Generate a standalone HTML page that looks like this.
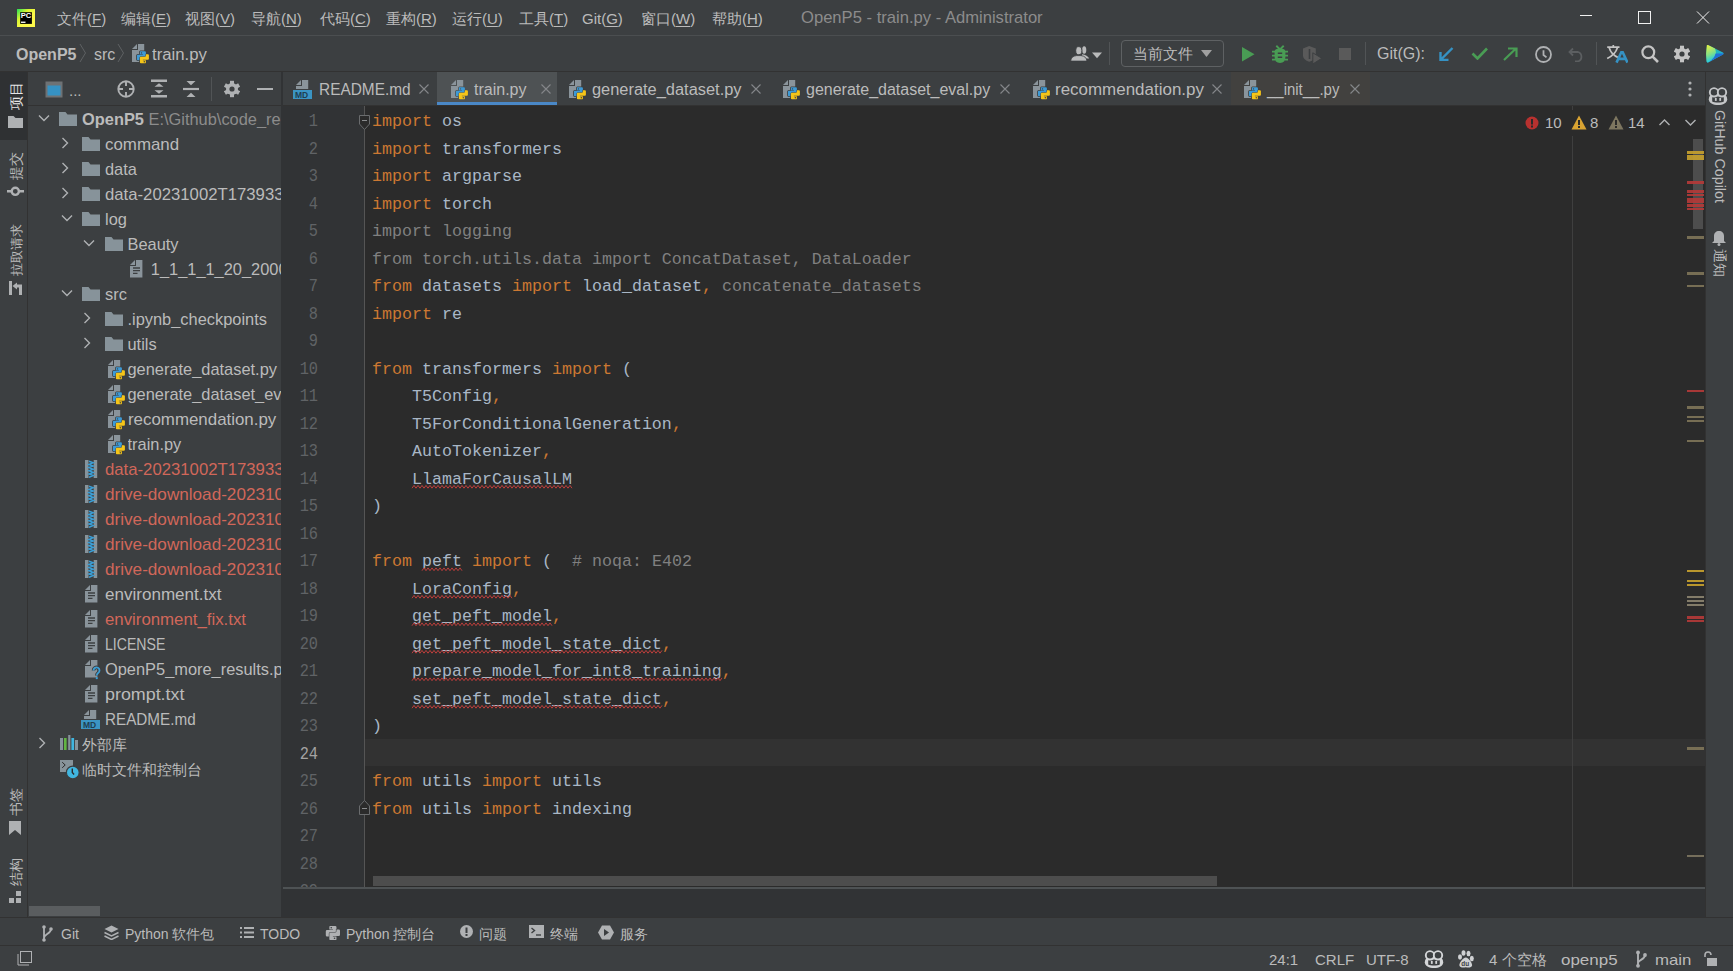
<!DOCTYPE html>
<html><head><meta charset="utf-8"><style>
html,body{margin:0;padding:0;}
body{width:1733px;height:971px;overflow:hidden;position:relative;background:#3c3f41;font-family:"Liberation Sans", sans-serif;}
body div, body svg{position:absolute;}
span,b,u{position:static;}
.t{white-space:nowrap;font-family:"Liberation Sans", sans-serif;}
.m{font-family:"Liberation Mono", monospace;white-space:pre;}

u{text-decoration:underline;text-underline-offset:2px;}
</style></head><body>
<div style="left:0px;top:0px;width:1733px;height:35px;background:#3c3f41;"></div>
<div style="left:0px;top:35px;width:1733px;height:1px;background:#4b4e50;"></div>
<div style="left:0px;top:36px;width:1733px;height:35px;background:#3c3f41;"></div>
<div style="left:0px;top:71px;width:1733px;height:1px;background:#323232;"></div>
<div style="left:0px;top:72px;width:27px;height:845px;background:#3c3f41;"></div>
<div style="left:0px;top:72px;width:27px;height:68px;background:#2f3133;"></div>
<div style="left:27px;top:72px;width:1px;height:845px;background:#323232;"></div>
<div style="left:28px;top:72px;width:253px;height:845px;background:#3c3f41;"></div>
<div style="left:28px;top:105px;width:253px;height:1px;background:#323232;"></div>
<div style="left:281px;top:72px;width:2px;height:845px;background:#313335;"></div>
<div style="left:283px;top:72px;width:1422px;height:33px;background:#3c3f41;"></div>
<div style="left:283px;top:105px;width:1422px;height:1px;background:#323232;"></div>
<div style="left:283px;top:106px;width:82px;height:782px;background:#313335;"></div>
<div style="left:364px;top:106px;width:1px;height:782px;background:#555555;"></div>
<div style="left:365px;top:106px;width:1340px;height:782px;background:#2b2b2b;"></div>
<div style="left:365px;top:739px;width:1340px;height:27px;background:#323232;"></div>
<div style="left:1572px;top:136px;width:1px;height:751px;background:#3f3f3f;"></div>
<div style="left:1572px;top:106px;width:1px;height:4px;background:#3f3f3f;"></div>
<div style="left:283px;top:887px;width:1422px;height:2px;background:#4e5254;"></div>
<div style="left:283px;top:889px;width:1422px;height:28px;background:#313335;"></div>
<div style="left:1705px;top:72px;width:28px;height:845px;background:#3c3f41;"></div>
<div style="left:1705px;top:72px;width:1px;height:845px;background:#323232;"></div>
<div style="left:0px;top:917px;width:1733px;height:1px;background:#323232;"></div>
<div style="left:0px;top:918px;width:1733px;height:27px;background:#3c3f41;"></div>
<div style="left:0px;top:945px;width:1733px;height:1px;background:#323232;"></div>
<div style="left:0px;top:946px;width:1733px;height:25px;background:#3c3f41;"></div>
<svg style="left:17px;top:9px;" width="18" height="18" viewBox="0 0 18 18"><defs><linearGradient id="pcg" x1="0" y1="0" x2="0.6" y2="0.6"><stop offset="0" stop-color="#21e05a"/><stop offset="0.55" stop-color="#d8f531"/><stop offset="1" stop-color="#fcf84a"/></linearGradient></defs><rect x="0" y="0" width="18" height="18" fill="url(#pcg)"/><rect x="3.2" y="3.2" width="11.7" height="11.7" fill="#000"/><text x="3.8" y="9.4" font-family="Liberation Sans" font-weight="bold" font-size="7.6" fill="#fff">PC</text><rect x="4" y="12.6" width="4.5" height="1.3" fill="#fff"/></svg>
<div class="t" style="left:57px;top:10px;font-size:15px;line-height:17px;color:#bbbbbb;">文件(<u>F</u>)</div>
<div class="t" style="left:121px;top:10px;font-size:15px;line-height:17px;color:#bbbbbb;">编辑(<u>E</u>)</div>
<div class="t" style="left:185px;top:10px;font-size:15px;line-height:17px;color:#bbbbbb;">视图(<u>V</u>)</div>
<div class="t" style="left:251px;top:10px;font-size:15px;line-height:17px;color:#bbbbbb;">导航(<u>N</u>)</div>
<div class="t" style="left:320px;top:10px;font-size:15px;line-height:17px;color:#bbbbbb;">代码(<u>C</u>)</div>
<div class="t" style="left:386px;top:10px;font-size:15px;line-height:17px;color:#bbbbbb;">重构(<u>R</u>)</div>
<div class="t" style="left:452px;top:10px;font-size:15px;line-height:17px;color:#bbbbbb;">运行(<u>U</u>)</div>
<div class="t" style="left:519px;top:10px;font-size:15px;line-height:17px;color:#bbbbbb;">工具(<u>T</u>)</div>
<div class="t" style="left:582px;top:10px;font-size:15px;line-height:17px;color:#bbbbbb;">Git(<u>G</u>)</div>
<div class="t" style="left:641px;top:10px;font-size:15px;line-height:17px;color:#bbbbbb;">窗口(<u>W</u>)</div>
<div class="t" style="left:712px;top:10px;font-size:15px;line-height:17px;color:#bbbbbb;">帮助(<u>H</u>)</div>
<div class="t" style="left:801px;top:9px;font-size:16.6px;line-height:18px;color:#8c8c8c;">OpenP5 - train.py - Administrator</div>
<div style="left:1580px;top:15px;width:12px;height:1px;background:#f0f0f0;"></div>
<div style="left:1638px;top:11px;width:13px;height:13px;background:transparent;border:1px solid #f0f0f0;box-sizing:border-box;"></div>
<svg style="left:1696px;top:11px;" width="14" height="13" viewBox="0 0 14 13"><path d="M1 0.5L13 12.5M13 0.5L1 12.5" stroke="#f0f0f0" stroke-width="1"/></svg>
<div class="t" style="left:16px;top:46px;font-size:16px;line-height:18px;color:#bbbbbb;"><b>OpenP5</b></div>
<svg style="left:79px;top:43px;" width="8" height="20" viewBox="0 0 8 20"><path d="M1 1L6.5 10L1 19" stroke="#5e6163" fill="none" stroke-width="1"/></svg>
<div class="t" style="left:94px;top:46px;font-size:16px;line-height:18px;color:#bbbbbb;">src</div>
<svg style="left:117px;top:43px;" width="8" height="20" viewBox="0 0 8 20"><path d="M1 1L6.5 10L1 19" stroke="#5e6163" fill="none" stroke-width="1"/></svg>
<svg style="left:131px;top:43px;" width="20" height="22" viewBox="0 0 20 22"><path d="M7 1H13.2V19H1V7H7Z" fill="#8a949b"/><path d="M1 6L6 1V6Z" fill="#8a949b"/><g transform="translate(5.9 8.3) scale(1.0)"><path d="M3.5 0H8Q9 0 9 1V5.5Q9 6.5 8 6.5H4Q3 6.5 3 7.5V9H1Q0 9 0 8V4.5Q0 3.5 1 3.5H6V3H3V1Q3 0 3.5 0Z" fill="none" stroke="#3c3f41" stroke-width="1.6"/><path d="M8.5 12H4Q3 12 3 11V6.5Q3 5.5 4 5.5H8Q9 5.5 9 4.5V3H11Q12 3 12 4V7.5Q12 8.5 11 8.5H6V9H9V11Q9 12 8.5 12Z" fill="none" stroke="#3c3f41" stroke-width="1.6"/><path d="M3.5 0H8Q9 0 9 1V5.5Q9 6.5 8 6.5H4Q3 6.5 3 7.5V9H1Q0 9 0 8V4.5Q0 3.5 1 3.5H6V3H3V1Q3 0 3.5 0Z" fill="#3d9ad6"/><path d="M8.5 12H4Q3 12 3 11V6.5Q3 5.5 4 5.5H8Q9 5.5 9 4.5V3H11Q12 3 12 4V7.5Q12 8.5 11 8.5H6V9H9V11Q9 12 8.5 12Z" fill="none" stroke="#3c3f41" stroke-width="0.9"/><path d="M8.5 12H4Q3 12 3 11V6.5Q3 5.5 4 5.5H8Q9 5.5 9 4.5V3H11Q12 3 12 4V7.5Q12 8.5 11 8.5H6V9H9V11Q9 12 8.5 12Z" fill="#f5c518"/><circle cx="4.6" cy="1.6" r="0.7" fill="#3c3f41"/><circle cx="7.4" cy="10.4" r="0.7" fill="#3c3f41"/></g></svg>
<div class="t" style="left:152px;top:46px;font-size:16px;line-height:18px;color:#bbbbbb;transform:scaleX(1.045);transform-origin:0 0;">train.py</div>
<svg style="left:1070px;top:45px;" width="33" height="17" viewBox="0 0 33 17"><ellipse cx="14.2" cy="5" rx="2.1" ry="3.8" fill="#b9babb"/><path d="M12 9.2Q17.5 9.8 19.2 13.6H12Z" fill="#b9babb"/><ellipse cx="8.8" cy="5.7" rx="3.1" ry="4.1" fill="#b9babb" stroke="#3c3f41" stroke-width="1"/><path d="M0.7 16.1Q1 11.2 6.6 10.6H11Q16.5 11.2 16.9 16.1Z" fill="#b9babb" stroke="#3c3f41" stroke-width="0.8"/><path d="M22 7.6H32L27 13.2Z" fill="#b9babb"/></svg>
<div style="left:1109px;top:42px;width:1px;height:23px;background:#515456;"></div>
<div style="left:1121px;top:40px;width:103px;height:27px;background:transparent;border:1px solid #5e6163;border-radius:4px;box-sizing:border-box;"></div>
<div class="t" style="left:1133px;top:45px;font-size:15px;line-height:18px;color:#bbbbbb;">当前文件</div>
<svg style="left:1201px;top:50px;" width="12" height="8" viewBox="0 0 12 8"><path d="M0 0h11l-5.5 7z" fill="#a0a0a0"/></svg>
<svg style="left:1242px;top:47px;" width="13" height="15" viewBox="0 0 13 15"><path d="M0 0L12.5 7.2L0 14.5Z" fill="#499c54"/></svg>
<svg style="left:1272px;top:45px;" width="16" height="18" viewBox="0 0 16 18"><path d="M4.3 0.8L8 4.4L11.7 0.8" stroke="#499c54" stroke-width="1.9" fill="none"/><path d="M2.6 6.8Q2.6 3.6 8 3.6Q13.4 3.6 13.4 6.8V12Q13.4 17.9 8 17.9Q2.6 17.9 2.6 12Z" fill="#499c54"/><path d="M0 6.6h3M13 6.6h3M0 10.6h3M13 10.6h3M0 14.6h3M13 14.6h3" stroke="#499c54" stroke-width="1.9"/><path d="M5.8 8.3h4.4M5.8 12.2h4.4" stroke="#3c3f41" stroke-width="1.6"/></svg>
<svg style="left:1302px;top:46px;" width="20" height="19" viewBox="0 0 20 19"><path d="M1 2.5L7.2 0L13.8 2.5V9.5C13.8 12.5 11 14.5 7.2 15.8C3.5 14.5 1 12.5 1 9.5Z" fill="#5a5a5a"/><path d="M7.5 3V13" stroke="#3c3f41" stroke-width="1.6"/><path d="M10.8 6.8L19.8 12.3L10.8 18Z" fill="#5a5a5a" stroke="#3c3f41" stroke-width="1"/></svg>
<div style="left:1339px;top:48px;width:12px;height:12px;background:#5a5a5a;"></div>
<div style="left:1365px;top:42px;width:1px;height:23px;background:#515456;"></div>
<div class="t" style="left:1377px;top:45px;font-size:16px;line-height:18px;color:#bbbbbb;">Git(G):</div>
<svg style="left:1439px;top:47px;" width="15" height="14" viewBox="0 0 15 14"><path d="M13.5 1L2 12.5M1.5 5v8h8" stroke="#3592c4" stroke-width="2.4" fill="none"/></svg>
<svg style="left:1471px;top:47px;" width="17" height="13" viewBox="0 0 17 13"><path d="M1.5 6.5l5 5L16 1.5" stroke="#499c54" stroke-width="2.6" fill="none"/></svg>
<svg style="left:1503px;top:47px;" width="15" height="14" viewBox="0 0 15 14"><path d="M1 13L13 1.5M5 1.5h8.5v8.5" stroke="#499c54" stroke-width="2.2" fill="none"/></svg>
<svg style="left:1534px;top:46px;" width="19" height="17" viewBox="0 0 19 17"><circle cx="9.5" cy="8.5" r="7.5" stroke="#afb1b3" stroke-width="1.8" fill="none"/><path d="M9.5 4.2V9l3 2.4" stroke="#afb1b3" stroke-width="1.8" fill="none"/></svg>
<svg style="left:1568px;top:47px;" width="17" height="15" viewBox="0 0 17 15"><path d="M5 1.5L1.5 5L5 8.5" stroke="#5c5f61" stroke-width="1.8" fill="none"/><path d="M2 5h8a5 5 0 0 1 0 9.5H7" stroke="#5c5f61" stroke-width="1.8" fill="none"/></svg>
<div style="left:1596px;top:42px;width:1px;height:23px;background:#515456;"></div>
<svg style="left:1606px;top:44px;" width="22" height="20" viewBox="0 0 22 20"><path d="M1.2 3.2H13.5M7.3 1V3.2M3.2 3.8C4.5 8.5 8 12 13 14M11.4 3.8C10 8.5 6.5 12 1.2 14.5" stroke="#c4c4c4" stroke-width="1.7" fill="none"/><path d="M10.5 18.6L15.3 8.3H16.7L21.5 18.6M12.4 14.9H19.6" stroke="#3592c4" stroke-width="2.6" fill="none"/></svg>
<svg style="left:1640px;top:45px;" width="20" height="19" viewBox="0 0 20 19"><circle cx="8.3" cy="7.3" r="5.9" stroke="#c4c4c4" stroke-width="2.2" fill="none"/><path d="M12.6 11.6L18 17" stroke="#c4c4c4" stroke-width="2.6"/></svg>
<svg style="left:1674px;top:45px;" width="16" height="18" viewBox="0 0 16 18"><g transform="translate(8 9)"><circle r="6" fill="#c4c4c4"/><rect x="-2" y="-8.3" width="4" height="4" fill="#c4c4c4" transform="rotate(0)"/><rect x="-2" y="-8.3" width="4" height="4" fill="#c4c4c4" transform="rotate(60)"/><rect x="-2" y="-8.3" width="4" height="4" fill="#c4c4c4" transform="rotate(120)"/><rect x="-2" y="-8.3" width="4" height="4" fill="#c4c4c4" transform="rotate(180)"/><rect x="-2" y="-8.3" width="4" height="4" fill="#c4c4c4" transform="rotate(240)"/><rect x="-2" y="-8.3" width="4" height="4" fill="#c4c4c4" transform="rotate(300)"/><circle r="2.6" fill="#3c3f41"/></g></svg>
<svg style="left:1705px;top:44px;" width="20" height="20" viewBox="0 0 20 20"><defs><linearGradient id="lg1" x1="0" y1="0" x2="0.3" y2="1"><stop offset="0" stop-color="#f5f03a"/><stop offset="0.6" stop-color="#7fe08a"/><stop offset="1" stop-color="#1ec8e8"/></linearGradient><linearGradient id="lg2" x1="0" y1="0" x2="1" y2="1"><stop offset="0" stop-color="#22c48a"/><stop offset="1" stop-color="#1fa6f0"/></linearGradient></defs><path d="M1.8 2.2Q1.5 0.5 3.5 1.2L18 8.5Q19.4 9.5 18 10.5L3.5 18.2Q1.5 19 1.6 17Q0.6 9.5 1.8 2.2Z" fill="url(#lg2)"/><path d="M1.8 2.2Q1.5 0.5 3.5 1.2L10 4.5Q12 9.5 10 14.5L3.5 18.2Q1.5 19 1.6 17Q0.6 9.5 1.8 2.2Z" fill="url(#lg1)"/><path d="M10.5 9.6L18.6 9.6L18 10.5L4 18Q9.5 14.5 10.5 9.6Z" fill="#1f6fd6"/></svg>
<div class="t" style="left:10px;top:110px;font-size:13.5px;line-height:13.5px;color:#e6e6e6;transform-origin:0 0;transform:rotate(-90deg);white-space:nowrap">项目</div>
<svg style="left:8px;top:116px;" width="15" height="12" viewBox="0 0 15 12"><path d="M0 0h5.5l2 2H15v10H0z" fill="#afb1b3"/></svg>
<div class="t" style="left:10px;top:180px;font-size:13.5px;line-height:13.5px;color:#bbbbbb;transform-origin:0 0;transform:rotate(-90deg);white-space:nowrap">提交</div>
<svg style="left:7px;top:186px;" width="17" height="11" viewBox="0 0 17 11"><circle cx="8.3" cy="5.3" r="3.6" stroke="#afb1b3" stroke-width="2.4" fill="none"/><path d="M0 5.3h4.5M12 5.3h5" stroke="#afb1b3" stroke-width="2.6"/></svg>
<div class="t" style="left:10px;top:276px;font-size:13px;line-height:13px;color:#bbbbbb;transform-origin:0 0;transform:rotate(-90deg);white-space:nowrap">拉取请求</div>
<svg style="left:9px;top:281px;" width="14" height="15" viewBox="0 0 14 15"><rect x="0" y="0" width="3" height="14" fill="#afb1b3"/><path d="M3.5 5L8 1.5V8.5z" fill="#afb1b3"/><path d="M7 5H11.5V14" stroke="#afb1b3" stroke-width="3" fill="none"/></svg>
<div class="t" style="left:10px;top:816px;font-size:13.5px;line-height:13.5px;color:#bbbbbb;transform-origin:0 0;transform:rotate(-90deg);white-space:nowrap">书签</div>
<svg style="left:9px;top:821px;" width="13" height="15" viewBox="0 0 13 15"><path d="M0 0h12v14l-6-5-6 5z" fill="#afb1b3"/></svg>
<div class="t" style="left:10px;top:886px;font-size:13.5px;line-height:13.5px;color:#bbbbbb;transform-origin:0 0;transform:rotate(-90deg);white-space:nowrap">结构</div>
<svg style="left:9px;top:891px;" width="13" height="13" viewBox="0 0 13 13"><rect x="7" y="0" width="5" height="5" fill="#afb1b3"/><rect x="0" y="7" width="5" height="5" fill="#afb1b3"/><rect x="7" y="7" width="5" height="5" fill="#afb1b3"/></svg>
<svg style="left:1708px;top:87px;" width="20" height="19" viewBox="0 0 20 19"><path d="M0.8 12.2C0.8 9.6 2.2 8 4 8H16C17.8 8 19.2 9.6 19.2 12.2C19.2 16 15 18 10 18C5 18 0.8 16 0.8 12.2Z" fill="#c4c6c8"/><path d="M4.2 9.6H15.8V14.6C14 15.9 6 15.9 4.2 14.6Z" fill="#3c3f41"/><rect x="6.9" y="10.9" width="1.8" height="3" fill="#c4c6c8"/><rect x="11.3" y="10.9" width="1.8" height="3" fill="#c4c6c8"/><ellipse cx="6" cy="5.3" rx="4.2" ry="4.2" fill="#3c3f41" stroke="#c4c6c8" stroke-width="1.9"/><ellipse cx="14" cy="5.3" rx="4.2" ry="4.2" fill="#3c3f41" stroke="#c4c6c8" stroke-width="1.9"/></svg>
<div class="t" style="left:1727px;top:110px;font-size:14.3px;line-height:14.3px;color:#bbbbbb;transform-origin:0 0;transform:rotate(90deg);white-space:nowrap">GitHub Copilot</div>
<svg style="left:1711px;top:230px;" width="16" height="16" viewBox="0 0 16 16"><path d="M8 1c3 0 5 2 5 5v5l2 2H1l2-2V6c0-3 2-5 5-5z" fill="#afb1b3"/><circle cx="8" cy="14.5" r="1.5" fill="#afb1b3"/></svg>
<div class="t" style="left:1727px;top:249px;font-size:14px;line-height:14px;color:#bbbbbb;transform-origin:0 0;transform:rotate(90deg);white-space:nowrap">通知</div>
<svg style="left:45px;top:81px;" width="18" height="17" viewBox="0 0 18 17"><rect x="0.5" y="0.5" width="17" height="16" fill="#6e7275"/><rect x="2.5" y="4.5" width="13" height="10" fill="#3592c4"/></svg>
<div class="t" style="left:69px;top:83px;font-size:15px;line-height:16px;color:#bbbbbb;">...</div>
<svg style="left:117px;top:80px;" width="18" height="18" viewBox="0 0 18 18"><circle cx="9" cy="9" r="7.7" stroke="#afb1b3" stroke-width="1.9" fill="none"/><path d="M9 1.5v4.5M9 12v4.5M1.5 9h4.5M12 9h4.5" stroke="#afb1b3" stroke-width="1.9"/></svg>
<svg style="left:151px;top:79px;" width="16" height="19" viewBox="0 0 16 19"><path d="M0 1.8h16M0 17.2h16" stroke="#afb1b3" stroke-width="2.6"/><path d="M3.5 7.8L8 4.3L12.5 7.8zM3.5 11.2L8 14.7L12.5 11.2z" fill="#afb1b3"/></svg>
<svg style="left:183px;top:80px;" width="16" height="18" viewBox="0 0 16 18"><path d="M0 9h16" stroke="#afb1b3" stroke-width="2.2"/><path d="M3.5 1L8 5.2L12.5 1zM3.5 17L8 12.8L12.5 17z" fill="#afb1b3"/></svg>
<div style="left:211px;top:77px;width:1px;height:24px;background:#515456;"></div>
<svg style="left:224px;top:80px;" width="16" height="18" viewBox="0 0 16 18"><g transform="translate(8 9)"><circle r="6" fill="#afb1b3"/><rect x="-2" y="-8.2" width="4" height="4" fill="#afb1b3" transform="rotate(0)"/><rect x="-2" y="-8.2" width="4" height="4" fill="#afb1b3" transform="rotate(60)"/><rect x="-2" y="-8.2" width="4" height="4" fill="#afb1b3" transform="rotate(120)"/><rect x="-2" y="-8.2" width="4" height="4" fill="#afb1b3" transform="rotate(180)"/><rect x="-2" y="-8.2" width="4" height="4" fill="#afb1b3" transform="rotate(240)"/><rect x="-2" y="-8.2" width="4" height="4" fill="#afb1b3" transform="rotate(300)"/><circle r="2.6" fill="#3c3f41"/></g></svg>
<div style="left:257px;top:88px;width:16px;height:2px;background:#afb1b3;"></div>
<svg style="left:38px;top:114px;" width="12" height="8" viewBox="0 0 12 8"><path d="M1 1.5l5 5 5-5" stroke="#afb1b3" stroke-width="1.4" fill="none"/></svg>
<svg style="left:59px;top:112px;" width="18" height="14" viewBox="0 0 18 14"><path d="M0 0h6.5l2 2.5H18V14H0z" fill="#87939a"/></svg>
<div class="t" style="left:82px;top:110px;width:199px;overflow:hidden;font-size:16.4px;line-height:18px;color:#bbbbbb"><b>OpenP5</b> <span style="color:#8c8c8c">E:\Github\code_re</span></div>
<svg style="left:61px;top:137px;" width="8" height="12" viewBox="0 0 8 12"><path d="M1.5 1l5 5-5 5" stroke="#afb1b3" stroke-width="1.4" fill="none"/></svg>
<svg style="left:82px;top:137px;" width="18" height="14" viewBox="0 0 18 14"><path d="M0 0h6.5l2 2.5H18V14H0z" fill="#87939a"/></svg>
<div style="left:105px;top:135px;width:176px;height:20px;overflow:hidden"><div class="t" style="left:0;top:0;font-size:16.4px;line-height:18px;color:#bbbbbb;transform:scaleX(1.03);transform-origin:0 0">command</div></div>
<svg style="left:61px;top:162px;" width="8" height="12" viewBox="0 0 8 12"><path d="M1.5 1l5 5-5 5" stroke="#afb1b3" stroke-width="1.4" fill="none"/></svg>
<svg style="left:82px;top:162px;" width="18" height="14" viewBox="0 0 18 14"><path d="M0 0h6.5l2 2.5H18V14H0z" fill="#87939a"/></svg>
<div class="t" style="left:105px;top:160px;width:176px;overflow:hidden;font-size:16.4px;line-height:18px;color:#bbbbbb">data</div>
<svg style="left:61px;top:187px;" width="8" height="12" viewBox="0 0 8 12"><path d="M1.5 1l5 5-5 5" stroke="#afb1b3" stroke-width="1.4" fill="none"/></svg>
<svg style="left:82px;top:187px;" width="18" height="14" viewBox="0 0 18 14"><path d="M0 0h6.5l2 2.5H18V14H0z" fill="#87939a"/></svg>
<div style="left:105px;top:185px;width:176px;height:20px;overflow:hidden"><div class="t" style="left:0;top:0;font-size:16.4px;line-height:18px;color:#bbbbbb;transform:scaleX(1.02);transform-origin:0 0">data-20231002T1739332</div></div>
<svg style="left:61px;top:214px;" width="12" height="8" viewBox="0 0 12 8"><path d="M1 1.5l5 5 5-5" stroke="#afb1b3" stroke-width="1.4" fill="none"/></svg>
<svg style="left:82px;top:212px;" width="18" height="14" viewBox="0 0 18 14"><path d="M0 0h6.5l2 2.5H18V14H0z" fill="#87939a"/></svg>
<div class="t" style="left:105px;top:210px;width:176px;overflow:hidden;font-size:16.4px;line-height:18px;color:#bbbbbb">log</div>
<svg style="left:83px;top:239px;" width="12" height="8" viewBox="0 0 12 8"><path d="M1 1.5l5 5 5-5" stroke="#afb1b3" stroke-width="1.4" fill="none"/></svg>
<svg style="left:104.5px;top:237px;" width="18" height="14" viewBox="0 0 18 14"><path d="M0 0h6.5l2 2.5H18V14H0z" fill="#87939a"/></svg>
<div class="t" style="left:127.5px;top:235px;width:153.5px;overflow:hidden;font-size:16.4px;line-height:18px;color:#bbbbbb">Beauty</div>
<svg style="left:130.3px;top:260px;" width="13" height="18" viewBox="0 0 13 18"><path d="M6 0H12.4V17.5H0V6H6Z" fill="#8a949b"/><path d="M0 5L5 0V5Z" fill="#8a949b"/><path d="M3 8h7M3 10.6h7M3 13.3h4.5" stroke="#3c3f41" stroke-width="1.3"/></svg>
<div class="t" style="left:150.8px;top:260px;width:130.2px;overflow:hidden;font-size:16.4px;line-height:18px;color:#bbbbbb">1_1_1_1_20_2000_</div>
<svg style="left:61px;top:289px;" width="12" height="8" viewBox="0 0 12 8"><path d="M1 1.5l5 5 5-5" stroke="#afb1b3" stroke-width="1.4" fill="none"/></svg>
<svg style="left:82px;top:287px;" width="18" height="14" viewBox="0 0 18 14"><path d="M0 0h6.5l2 2.5H18V14H0z" fill="#87939a"/></svg>
<div class="t" style="left:105px;top:285px;width:176px;overflow:hidden;font-size:16.4px;line-height:18px;color:#bbbbbb">src</div>
<svg style="left:83px;top:312px;" width="8" height="12" viewBox="0 0 8 12"><path d="M1.5 1l5 5-5 5" stroke="#afb1b3" stroke-width="1.4" fill="none"/></svg>
<svg style="left:104.5px;top:312px;" width="18" height="14" viewBox="0 0 18 14"><path d="M0 0h6.5l2 2.5H18V14H0z" fill="#87939a"/></svg>
<div class="t" style="left:127.5px;top:310px;width:153.5px;overflow:hidden;font-size:16.4px;line-height:18px;color:#bbbbbb">.ipynb_checkpoints</div>
<svg style="left:83px;top:337px;" width="8" height="12" viewBox="0 0 8 12"><path d="M1.5 1l5 5-5 5" stroke="#afb1b3" stroke-width="1.4" fill="none"/></svg>
<svg style="left:104.5px;top:337px;" width="18" height="14" viewBox="0 0 18 14"><path d="M0 0h6.5l2 2.5H18V14H0z" fill="#87939a"/></svg>
<div class="t" style="left:127.5px;top:335px;width:153.5px;overflow:hidden;font-size:16.4px;line-height:18px;color:#bbbbbb">utils</div>
<svg style="left:106.9px;top:358.9px;" width="20" height="22" viewBox="0 0 20 22"><path d="M7 1H13.2V19H1V7H7Z" fill="#8a949b"/><path d="M1 6L6 1V6Z" fill="#8a949b"/><g transform="translate(5.9 8.3) scale(1.0)"><path d="M3.5 0H8Q9 0 9 1V5.5Q9 6.5 8 6.5H4Q3 6.5 3 7.5V9H1Q0 9 0 8V4.5Q0 3.5 1 3.5H6V3H3V1Q3 0 3.5 0Z" fill="none" stroke="#3c3f41" stroke-width="1.6"/><path d="M8.5 12H4Q3 12 3 11V6.5Q3 5.5 4 5.5H8Q9 5.5 9 4.5V3H11Q12 3 12 4V7.5Q12 8.5 11 8.5H6V9H9V11Q9 12 8.5 12Z" fill="none" stroke="#3c3f41" stroke-width="1.6"/><path d="M3.5 0H8Q9 0 9 1V5.5Q9 6.5 8 6.5H4Q3 6.5 3 7.5V9H1Q0 9 0 8V4.5Q0 3.5 1 3.5H6V3H3V1Q3 0 3.5 0Z" fill="#3d9ad6"/><path d="M8.5 12H4Q3 12 3 11V6.5Q3 5.5 4 5.5H8Q9 5.5 9 4.5V3H11Q12 3 12 4V7.5Q12 8.5 11 8.5H6V9H9V11Q9 12 8.5 12Z" fill="none" stroke="#3c3f41" stroke-width="0.9"/><path d="M8.5 12H4Q3 12 3 11V6.5Q3 5.5 4 5.5H8Q9 5.5 9 4.5V3H11Q12 3 12 4V7.5Q12 8.5 11 8.5H6V9H9V11Q9 12 8.5 12Z" fill="#f5c518"/><circle cx="4.6" cy="1.6" r="0.7" fill="#3c3f41"/><circle cx="7.4" cy="10.4" r="0.7" fill="#3c3f41"/></g></svg>
<div class="t" style="left:127.5px;top:360px;width:153.5px;overflow:hidden;font-size:16.4px;line-height:18px;color:#bbbbbb">generate_dataset.py</div>
<svg style="left:106.9px;top:383.9px;" width="20" height="22" viewBox="0 0 20 22"><path d="M7 1H13.2V19H1V7H7Z" fill="#8a949b"/><path d="M1 6L6 1V6Z" fill="#8a949b"/><g transform="translate(5.9 8.3) scale(1.0)"><path d="M3.5 0H8Q9 0 9 1V5.5Q9 6.5 8 6.5H4Q3 6.5 3 7.5V9H1Q0 9 0 8V4.5Q0 3.5 1 3.5H6V3H3V1Q3 0 3.5 0Z" fill="none" stroke="#3c3f41" stroke-width="1.6"/><path d="M8.5 12H4Q3 12 3 11V6.5Q3 5.5 4 5.5H8Q9 5.5 9 4.5V3H11Q12 3 12 4V7.5Q12 8.5 11 8.5H6V9H9V11Q9 12 8.5 12Z" fill="none" stroke="#3c3f41" stroke-width="1.6"/><path d="M3.5 0H8Q9 0 9 1V5.5Q9 6.5 8 6.5H4Q3 6.5 3 7.5V9H1Q0 9 0 8V4.5Q0 3.5 1 3.5H6V3H3V1Q3 0 3.5 0Z" fill="#3d9ad6"/><path d="M8.5 12H4Q3 12 3 11V6.5Q3 5.5 4 5.5H8Q9 5.5 9 4.5V3H11Q12 3 12 4V7.5Q12 8.5 11 8.5H6V9H9V11Q9 12 8.5 12Z" fill="none" stroke="#3c3f41" stroke-width="0.9"/><path d="M8.5 12H4Q3 12 3 11V6.5Q3 5.5 4 5.5H8Q9 5.5 9 4.5V3H11Q12 3 12 4V7.5Q12 8.5 11 8.5H6V9H9V11Q9 12 8.5 12Z" fill="#f5c518"/><circle cx="4.6" cy="1.6" r="0.7" fill="#3c3f41"/><circle cx="7.4" cy="10.4" r="0.7" fill="#3c3f41"/></g></svg>
<div class="t" style="left:127.5px;top:385px;width:153.5px;overflow:hidden;font-size:16.4px;line-height:18px;color:#bbbbbb">generate_dataset_eval.py</div>
<svg style="left:106.9px;top:408.9px;" width="20" height="22" viewBox="0 0 20 22"><path d="M7 1H13.2V19H1V7H7Z" fill="#8a949b"/><path d="M1 6L6 1V6Z" fill="#8a949b"/><g transform="translate(5.9 8.3) scale(1.0)"><path d="M3.5 0H8Q9 0 9 1V5.5Q9 6.5 8 6.5H4Q3 6.5 3 7.5V9H1Q0 9 0 8V4.5Q0 3.5 1 3.5H6V3H3V1Q3 0 3.5 0Z" fill="none" stroke="#3c3f41" stroke-width="1.6"/><path d="M8.5 12H4Q3 12 3 11V6.5Q3 5.5 4 5.5H8Q9 5.5 9 4.5V3H11Q12 3 12 4V7.5Q12 8.5 11 8.5H6V9H9V11Q9 12 8.5 12Z" fill="none" stroke="#3c3f41" stroke-width="1.6"/><path d="M3.5 0H8Q9 0 9 1V5.5Q9 6.5 8 6.5H4Q3 6.5 3 7.5V9H1Q0 9 0 8V4.5Q0 3.5 1 3.5H6V3H3V1Q3 0 3.5 0Z" fill="#3d9ad6"/><path d="M8.5 12H4Q3 12 3 11V6.5Q3 5.5 4 5.5H8Q9 5.5 9 4.5V3H11Q12 3 12 4V7.5Q12 8.5 11 8.5H6V9H9V11Q9 12 8.5 12Z" fill="none" stroke="#3c3f41" stroke-width="0.9"/><path d="M8.5 12H4Q3 12 3 11V6.5Q3 5.5 4 5.5H8Q9 5.5 9 4.5V3H11Q12 3 12 4V7.5Q12 8.5 11 8.5H6V9H9V11Q9 12 8.5 12Z" fill="#f5c518"/><circle cx="4.6" cy="1.6" r="0.7" fill="#3c3f41"/><circle cx="7.4" cy="10.4" r="0.7" fill="#3c3f41"/></g></svg>
<div style="left:127.5px;top:410px;width:153.5px;height:20px;overflow:hidden"><div class="t" style="left:0;top:0;font-size:16.4px;line-height:18px;color:#bbbbbb;transform:scaleX(1.03);transform-origin:0 0">recommendation.py</div></div>
<svg style="left:106.9px;top:433.9px;" width="20" height="22" viewBox="0 0 20 22"><path d="M7 1H13.2V19H1V7H7Z" fill="#8a949b"/><path d="M1 6L6 1V6Z" fill="#8a949b"/><g transform="translate(5.9 8.3) scale(1.0)"><path d="M3.5 0H8Q9 0 9 1V5.5Q9 6.5 8 6.5H4Q3 6.5 3 7.5V9H1Q0 9 0 8V4.5Q0 3.5 1 3.5H6V3H3V1Q3 0 3.5 0Z" fill="none" stroke="#3c3f41" stroke-width="1.6"/><path d="M8.5 12H4Q3 12 3 11V6.5Q3 5.5 4 5.5H8Q9 5.5 9 4.5V3H11Q12 3 12 4V7.5Q12 8.5 11 8.5H6V9H9V11Q9 12 8.5 12Z" fill="none" stroke="#3c3f41" stroke-width="1.6"/><path d="M3.5 0H8Q9 0 9 1V5.5Q9 6.5 8 6.5H4Q3 6.5 3 7.5V9H1Q0 9 0 8V4.5Q0 3.5 1 3.5H6V3H3V1Q3 0 3.5 0Z" fill="#3d9ad6"/><path d="M8.5 12H4Q3 12 3 11V6.5Q3 5.5 4 5.5H8Q9 5.5 9 4.5V3H11Q12 3 12 4V7.5Q12 8.5 11 8.5H6V9H9V11Q9 12 8.5 12Z" fill="none" stroke="#3c3f41" stroke-width="0.9"/><path d="M8.5 12H4Q3 12 3 11V6.5Q3 5.5 4 5.5H8Q9 5.5 9 4.5V3H11Q12 3 12 4V7.5Q12 8.5 11 8.5H6V9H9V11Q9 12 8.5 12Z" fill="#f5c518"/><circle cx="4.6" cy="1.6" r="0.7" fill="#3c3f41"/><circle cx="7.4" cy="10.4" r="0.7" fill="#3c3f41"/></g></svg>
<div class="t" style="left:127.5px;top:435px;width:153.5px;overflow:hidden;font-size:16.4px;line-height:18px;color:#bbbbbb">train.py</div>
<svg style="left:84.8px;top:460px;" width="13" height="18" viewBox="0 0 13 18"><rect x="0" y="0" width="3.5" height="18" fill="#87939a"/><rect x="8.7" y="0" width="3.5" height="18" fill="#87939a"/><path d="M4 1.2l4.2 1.6-4.2 1.6 4.2 1.6-4.2 1.6 4.2 1.6-4.2 1.6 4.2 1.6-4.2 1.6 4.2 1.6-4.2 1.6" stroke="#3c9fd6" stroke-width="1.5" fill="none"/></svg>
<div style="left:105px;top:460px;width:176px;height:20px;overflow:hidden"><div class="t" style="left:0;top:0;font-size:16.4px;line-height:18px;color:#d1675a;transform:scaleX(1.02);transform-origin:0 0">data-20231002T1739332</div></div>
<svg style="left:84.8px;top:485px;" width="13" height="18" viewBox="0 0 13 18"><rect x="0" y="0" width="3.5" height="18" fill="#87939a"/><rect x="8.7" y="0" width="3.5" height="18" fill="#87939a"/><path d="M4 1.2l4.2 1.6-4.2 1.6 4.2 1.6-4.2 1.6 4.2 1.6-4.2 1.6 4.2 1.6-4.2 1.6 4.2 1.6-4.2 1.6" stroke="#3c9fd6" stroke-width="1.5" fill="none"/></svg>
<div style="left:105px;top:485px;width:176px;height:20px;overflow:hidden"><div class="t" style="left:0;top:0;font-size:16.4px;line-height:18px;color:#d1675a;transform:scaleX(1.045);transform-origin:0 0">drive-download-2023100</div></div>
<svg style="left:84.8px;top:510px;" width="13" height="18" viewBox="0 0 13 18"><rect x="0" y="0" width="3.5" height="18" fill="#87939a"/><rect x="8.7" y="0" width="3.5" height="18" fill="#87939a"/><path d="M4 1.2l4.2 1.6-4.2 1.6 4.2 1.6-4.2 1.6 4.2 1.6-4.2 1.6 4.2 1.6-4.2 1.6 4.2 1.6-4.2 1.6" stroke="#3c9fd6" stroke-width="1.5" fill="none"/></svg>
<div style="left:105px;top:510px;width:176px;height:20px;overflow:hidden"><div class="t" style="left:0;top:0;font-size:16.4px;line-height:18px;color:#d1675a;transform:scaleX(1.045);transform-origin:0 0">drive-download-2023100</div></div>
<svg style="left:84.8px;top:535px;" width="13" height="18" viewBox="0 0 13 18"><rect x="0" y="0" width="3.5" height="18" fill="#87939a"/><rect x="8.7" y="0" width="3.5" height="18" fill="#87939a"/><path d="M4 1.2l4.2 1.6-4.2 1.6 4.2 1.6-4.2 1.6 4.2 1.6-4.2 1.6 4.2 1.6-4.2 1.6 4.2 1.6-4.2 1.6" stroke="#3c9fd6" stroke-width="1.5" fill="none"/></svg>
<div style="left:105px;top:535px;width:176px;height:20px;overflow:hidden"><div class="t" style="left:0;top:0;font-size:16.4px;line-height:18px;color:#d1675a;transform:scaleX(1.045);transform-origin:0 0">drive-download-2023100</div></div>
<svg style="left:84.8px;top:560px;" width="13" height="18" viewBox="0 0 13 18"><rect x="0" y="0" width="3.5" height="18" fill="#87939a"/><rect x="8.7" y="0" width="3.5" height="18" fill="#87939a"/><path d="M4 1.2l4.2 1.6-4.2 1.6 4.2 1.6-4.2 1.6 4.2 1.6-4.2 1.6 4.2 1.6-4.2 1.6 4.2 1.6-4.2 1.6" stroke="#3c9fd6" stroke-width="1.5" fill="none"/></svg>
<div style="left:105px;top:560px;width:176px;height:20px;overflow:hidden"><div class="t" style="left:0;top:0;font-size:16.4px;line-height:18px;color:#d1675a;transform:scaleX(1.045);transform-origin:0 0">drive-download-2023100</div></div>
<svg style="left:84.5px;top:585px;" width="13" height="18" viewBox="0 0 13 18"><path d="M6 0H12.4V17.5H0V6H6Z" fill="#8a949b"/><path d="M0 5L5 0V5Z" fill="#8a949b"/><path d="M3 8h7M3 10.6h7M3 13.3h4.5" stroke="#3c3f41" stroke-width="1.3"/></svg>
<div style="left:105px;top:585px;width:176px;height:20px;overflow:hidden"><div class="t" style="left:0;top:0;font-size:16.4px;line-height:18px;color:#bbbbbb;transform:scaleX(1.04);transform-origin:0 0">environment.txt</div></div>
<svg style="left:84.5px;top:610px;" width="13" height="18" viewBox="0 0 13 18"><path d="M6 0H12.4V17.5H0V6H6Z" fill="#8a949b"/><path d="M0 5L5 0V5Z" fill="#8a949b"/><path d="M3 8h7M3 10.6h7M3 13.3h4.5" stroke="#3c3f41" stroke-width="1.3"/></svg>
<div style="left:105px;top:610px;width:176px;height:20px;overflow:hidden"><div class="t" style="left:0;top:0;font-size:16.4px;line-height:18px;color:#d1675a;transform:scaleX(1.025);transform-origin:0 0">environment_fix.txt</div></div>
<svg style="left:84.5px;top:635px;" width="13" height="18" viewBox="0 0 13 18"><path d="M6 0H12.4V17.5H0V6H6Z" fill="#8a949b"/><path d="M0 5L5 0V5Z" fill="#8a949b"/><path d="M3 8h7M3 10.6h7M3 13.3h4.5" stroke="#3c3f41" stroke-width="1.3"/></svg>
<div style="left:105px;top:635px;width:176px;height:20px;overflow:hidden"><div class="t" style="left:0;top:0;font-size:16.4px;line-height:18px;color:#bbbbbb;transform:scaleX(0.86);transform-origin:0 0">LICENSE</div></div>
<svg style="left:84.5px;top:660px;" width="18" height="20" viewBox="0 0 18 20"><path d="M6 0H12.4V17.5H0V6H6Z" fill="#8a949b"/><path d="M0 5L5 0V5Z" fill="#8a949b"/><path d="M8.5 10.5a3 3 0 1 1 4.6 2.5c-1 .7-1.3 1.3-1.3 2.5" stroke="#3c3f41" stroke-width="3.6" fill="none"/><path d="M8.5 10.5a3 3 0 1 1 4.6 2.5c-1 .7-1.3 1.3-1.3 2.5" stroke="#3c9fd6" stroke-width="1.8" fill="none"/><circle cx="11.8" cy="18.2" r="1.1" fill="#3c9fd6"/></svg>
<div class="t" style="left:105px;top:660px;width:176px;overflow:hidden;font-size:16.4px;line-height:18px;color:#bbbbbb">OpenP5_more_results.pdf</div>
<svg style="left:84.5px;top:685px;" width="13" height="18" viewBox="0 0 13 18"><path d="M6 0H12.4V17.5H0V6H6Z" fill="#8a949b"/><path d="M0 5L5 0V5Z" fill="#8a949b"/><path d="M3 8h7M3 10.6h7M3 13.3h4.5" stroke="#3c3f41" stroke-width="1.3"/></svg>
<div style="left:105px;top:685px;width:176px;height:20px;overflow:hidden"><div class="t" style="left:0;top:0;font-size:16.4px;line-height:18px;color:#bbbbbb;transform:scaleX(1.09);transform-origin:0 0">prompt.txt</div></div>
<svg style="left:80.5px;top:710px;" width="20" height="20" viewBox="0 0 20 20"><path d="M9 0H15.2V9H3V6H9Z" fill="#8a949b"/><path d="M3 5L8 0V5Z" fill="#8a949b"/><rect x="0" y="10" width="19" height="9" fill="#3b95c4"/><text x="2" y="18" font-family="Liberation Sans" font-weight="bold" font-size="8.5" fill="#1f3f52">MD</text></svg>
<div style="left:105px;top:710px;width:176px;height:20px;overflow:hidden"><div class="t" style="left:0;top:0;font-size:16.4px;line-height:18px;color:#bbbbbb;transform:scaleX(0.93);transform-origin:0 0">README.md</div></div>
<svg style="left:38px;top:737px;" width="8" height="12" viewBox="0 0 8 12"><path d="M1.5 1l5 5-5 5" stroke="#afb1b3" stroke-width="1.4" fill="none"/></svg>
<svg style="left:60px;top:735px;" width="19" height="16" viewBox="0 0 19 16"><rect x="0" y="3" width="3" height="12" fill="#87939a"/><rect x="4" y="3" width="2.6" height="12" fill="#62b543"/><rect x="8.2" y="0" width="2.2" height="15" fill="#87939a"/><rect x="11.4" y="3" width="2.7" height="12" fill="#40b6e0"/><rect x="15" y="5" width="3" height="10" fill="#87939a"/></svg>
<div class="t" style="left:82px;top:735px;width:199px;overflow:hidden;font-size:16.4px;line-height:18px;color:#bbbbbb"><span style="font-size:15px">外部库</span></div>
<svg style="left:60px;top:759px;" width="21" height="21" viewBox="0 0 21 21"><rect x="0" y="1" width="13" height="12" fill="#87939a"/><path d="M2.2 3.2l3 2.8-3 2.8" stroke="#2b2b2b" stroke-width="1" fill="none"/><circle cx="12.8" cy="13.5" r="6.4" fill="#40b6e0" stroke="#3c3f41" stroke-width="1.2"/><path d="M12.3 9.5v4l1.8 2" stroke="#2b2b2b" stroke-width="1.4" fill="none"/></svg>
<div class="t" style="left:82px;top:760px;width:199px;overflow:hidden;font-size:16.4px;line-height:18px;color:#bbbbbb"><span style="font-size:15px">临时文件和控制台</span></div>
<div style="left:29px;top:906px;width:71px;height:10px;background:#5a5d5f;"></div>
<div style="left:437px;top:72px;width:120px;height:33px;background:#4e5254;"></div>
<div style="left:437px;top:102px;width:120px;height:3px;background:#4a88c7;"></div>
<div style="left:1231px;top:72px;width:139px;height:33px;background:#42413f;"></div>
<svg style="left:293px;top:80px;" width="20" height="20" viewBox="0 0 20 20"><path d="M9 0H15.2V9H3V6H9Z" fill="#8a949b"/><path d="M3 5L8 0V5Z" fill="#8a949b"/><rect x="0" y="10" width="19" height="9" fill="#3b95c4"/><text x="2" y="18" font-family="Liberation Sans" font-weight="bold" font-size="8.5" fill="#1f3f52">MD</text></svg>
<div class="t" style="left:319px;top:81px;font-size:16px;line-height:18px;color:#bbbbbb;transform:scaleX(0.963);transform-origin:0 0;">README.md</div>
<svg style="left:419px;top:84px;" width="10" height="10" viewBox="0 0 10 10"><path d="M0.5 0.5L9.5 9.5M9.5 0.5L0.5 9.5" stroke="#85878a" stroke-width="1.1"/></svg>
<svg style="left:450px;top:79px;" width="20" height="22" viewBox="0 0 20 22"><path d="M7 1H13.2V19H1V7H7Z" fill="#8a949b"/><path d="M1 6L6 1V6Z" fill="#8a949b"/><g transform="translate(5.9 8.3) scale(1.0)"><path d="M3.5 0H8Q9 0 9 1V5.5Q9 6.5 8 6.5H4Q3 6.5 3 7.5V9H1Q0 9 0 8V4.5Q0 3.5 1 3.5H6V3H3V1Q3 0 3.5 0Z" fill="none" stroke="#4e5254" stroke-width="1.6"/><path d="M8.5 12H4Q3 12 3 11V6.5Q3 5.5 4 5.5H8Q9 5.5 9 4.5V3H11Q12 3 12 4V7.5Q12 8.5 11 8.5H6V9H9V11Q9 12 8.5 12Z" fill="none" stroke="#4e5254" stroke-width="1.6"/><path d="M3.5 0H8Q9 0 9 1V5.5Q9 6.5 8 6.5H4Q3 6.5 3 7.5V9H1Q0 9 0 8V4.5Q0 3.5 1 3.5H6V3H3V1Q3 0 3.5 0Z" fill="#3d9ad6"/><path d="M8.5 12H4Q3 12 3 11V6.5Q3 5.5 4 5.5H8Q9 5.5 9 4.5V3H11Q12 3 12 4V7.5Q12 8.5 11 8.5H6V9H9V11Q9 12 8.5 12Z" fill="none" stroke="#4e5254" stroke-width="0.9"/><path d="M8.5 12H4Q3 12 3 11V6.5Q3 5.5 4 5.5H8Q9 5.5 9 4.5V3H11Q12 3 12 4V7.5Q12 8.5 11 8.5H6V9H9V11Q9 12 8.5 12Z" fill="#f5c518"/><circle cx="4.6" cy="1.6" r="0.7" fill="#4e5254"/><circle cx="7.4" cy="10.4" r="0.7" fill="#4e5254"/></g></svg>
<div class="t" style="left:474px;top:81px;font-size:16px;line-height:18px;color:#bbbbbb;">train.py</div>
<svg style="left:541px;top:84px;" width="10" height="10" viewBox="0 0 10 10"><path d="M0.5 0.5L9.5 9.5M9.5 0.5L0.5 9.5" stroke="#85878a" stroke-width="1.1"/></svg>
<svg style="left:568px;top:79px;" width="20" height="22" viewBox="0 0 20 22"><path d="M7 1H13.2V19H1V7H7Z" fill="#8a949b"/><path d="M1 6L6 1V6Z" fill="#8a949b"/><g transform="translate(5.9 8.3) scale(1.0)"><path d="M3.5 0H8Q9 0 9 1V5.5Q9 6.5 8 6.5H4Q3 6.5 3 7.5V9H1Q0 9 0 8V4.5Q0 3.5 1 3.5H6V3H3V1Q3 0 3.5 0Z" fill="none" stroke="#3c3f41" stroke-width="1.6"/><path d="M8.5 12H4Q3 12 3 11V6.5Q3 5.5 4 5.5H8Q9 5.5 9 4.5V3H11Q12 3 12 4V7.5Q12 8.5 11 8.5H6V9H9V11Q9 12 8.5 12Z" fill="none" stroke="#3c3f41" stroke-width="1.6"/><path d="M3.5 0H8Q9 0 9 1V5.5Q9 6.5 8 6.5H4Q3 6.5 3 7.5V9H1Q0 9 0 8V4.5Q0 3.5 1 3.5H6V3H3V1Q3 0 3.5 0Z" fill="#3d9ad6"/><path d="M8.5 12H4Q3 12 3 11V6.5Q3 5.5 4 5.5H8Q9 5.5 9 4.5V3H11Q12 3 12 4V7.5Q12 8.5 11 8.5H6V9H9V11Q9 12 8.5 12Z" fill="none" stroke="#3c3f41" stroke-width="0.9"/><path d="M8.5 12H4Q3 12 3 11V6.5Q3 5.5 4 5.5H8Q9 5.5 9 4.5V3H11Q12 3 12 4V7.5Q12 8.5 11 8.5H6V9H9V11Q9 12 8.5 12Z" fill="#f5c518"/><circle cx="4.6" cy="1.6" r="0.7" fill="#3c3f41"/><circle cx="7.4" cy="10.4" r="0.7" fill="#3c3f41"/></g></svg>
<div class="t" style="left:592px;top:81px;font-size:16px;line-height:18px;color:#bbbbbb;transform:scaleX(1.025);transform-origin:0 0;">generate_dataset.py</div>
<svg style="left:751px;top:84px;" width="10" height="10" viewBox="0 0 10 10"><path d="M0.5 0.5L9.5 9.5M9.5 0.5L0.5 9.5" stroke="#85878a" stroke-width="1.1"/></svg>
<svg style="left:782px;top:79px;" width="20" height="22" viewBox="0 0 20 22"><path d="M7 1H13.2V19H1V7H7Z" fill="#8a949b"/><path d="M1 6L6 1V6Z" fill="#8a949b"/><g transform="translate(5.9 8.3) scale(1.0)"><path d="M3.5 0H8Q9 0 9 1V5.5Q9 6.5 8 6.5H4Q3 6.5 3 7.5V9H1Q0 9 0 8V4.5Q0 3.5 1 3.5H6V3H3V1Q3 0 3.5 0Z" fill="none" stroke="#3c3f41" stroke-width="1.6"/><path d="M8.5 12H4Q3 12 3 11V6.5Q3 5.5 4 5.5H8Q9 5.5 9 4.5V3H11Q12 3 12 4V7.5Q12 8.5 11 8.5H6V9H9V11Q9 12 8.5 12Z" fill="none" stroke="#3c3f41" stroke-width="1.6"/><path d="M3.5 0H8Q9 0 9 1V5.5Q9 6.5 8 6.5H4Q3 6.5 3 7.5V9H1Q0 9 0 8V4.5Q0 3.5 1 3.5H6V3H3V1Q3 0 3.5 0Z" fill="#3d9ad6"/><path d="M8.5 12H4Q3 12 3 11V6.5Q3 5.5 4 5.5H8Q9 5.5 9 4.5V3H11Q12 3 12 4V7.5Q12 8.5 11 8.5H6V9H9V11Q9 12 8.5 12Z" fill="none" stroke="#3c3f41" stroke-width="0.9"/><path d="M8.5 12H4Q3 12 3 11V6.5Q3 5.5 4 5.5H8Q9 5.5 9 4.5V3H11Q12 3 12 4V7.5Q12 8.5 11 8.5H6V9H9V11Q9 12 8.5 12Z" fill="#f5c518"/><circle cx="4.6" cy="1.6" r="0.7" fill="#3c3f41"/><circle cx="7.4" cy="10.4" r="0.7" fill="#3c3f41"/></g></svg>
<div class="t" style="left:806px;top:81px;font-size:16px;line-height:18px;color:#bbbbbb;">generate_dataset_eval.py</div>
<svg style="left:1000px;top:84px;" width="10" height="10" viewBox="0 0 10 10"><path d="M0.5 0.5L9.5 9.5M9.5 0.5L0.5 9.5" stroke="#85878a" stroke-width="1.1"/></svg>
<svg style="left:1032px;top:79px;" width="20" height="22" viewBox="0 0 20 22"><path d="M7 1H13.2V19H1V7H7Z" fill="#8a949b"/><path d="M1 6L6 1V6Z" fill="#8a949b"/><g transform="translate(5.9 8.3) scale(1.0)"><path d="M3.5 0H8Q9 0 9 1V5.5Q9 6.5 8 6.5H4Q3 6.5 3 7.5V9H1Q0 9 0 8V4.5Q0 3.5 1 3.5H6V3H3V1Q3 0 3.5 0Z" fill="none" stroke="#3c3f41" stroke-width="1.6"/><path d="M8.5 12H4Q3 12 3 11V6.5Q3 5.5 4 5.5H8Q9 5.5 9 4.5V3H11Q12 3 12 4V7.5Q12 8.5 11 8.5H6V9H9V11Q9 12 8.5 12Z" fill="none" stroke="#3c3f41" stroke-width="1.6"/><path d="M3.5 0H8Q9 0 9 1V5.5Q9 6.5 8 6.5H4Q3 6.5 3 7.5V9H1Q0 9 0 8V4.5Q0 3.5 1 3.5H6V3H3V1Q3 0 3.5 0Z" fill="#3d9ad6"/><path d="M8.5 12H4Q3 12 3 11V6.5Q3 5.5 4 5.5H8Q9 5.5 9 4.5V3H11Q12 3 12 4V7.5Q12 8.5 11 8.5H6V9H9V11Q9 12 8.5 12Z" fill="none" stroke="#3c3f41" stroke-width="0.9"/><path d="M8.5 12H4Q3 12 3 11V6.5Q3 5.5 4 5.5H8Q9 5.5 9 4.5V3H11Q12 3 12 4V7.5Q12 8.5 11 8.5H6V9H9V11Q9 12 8.5 12Z" fill="#f5c518"/><circle cx="4.6" cy="1.6" r="0.7" fill="#3c3f41"/><circle cx="7.4" cy="10.4" r="0.7" fill="#3c3f41"/></g></svg>
<div class="t" style="left:1055px;top:81px;font-size:16px;line-height:18px;color:#bbbbbb;transform:scaleX(1.06);transform-origin:0 0;">recommendation.py</div>
<svg style="left:1212px;top:84px;" width="10" height="10" viewBox="0 0 10 10"><path d="M0.5 0.5L9.5 9.5M9.5 0.5L0.5 9.5" stroke="#85878a" stroke-width="1.1"/></svg>
<svg style="left:1243px;top:79px;" width="20" height="22" viewBox="0 0 20 22"><path d="M7 1H13.2V19H1V7H7Z" fill="#8a949b"/><path d="M1 6L6 1V6Z" fill="#8a949b"/><g transform="translate(5.9 8.3) scale(1.0)"><path d="M3.5 0H8Q9 0 9 1V5.5Q9 6.5 8 6.5H4Q3 6.5 3 7.5V9H1Q0 9 0 8V4.5Q0 3.5 1 3.5H6V3H3V1Q3 0 3.5 0Z" fill="none" stroke="#42413f" stroke-width="1.6"/><path d="M8.5 12H4Q3 12 3 11V6.5Q3 5.5 4 5.5H8Q9 5.5 9 4.5V3H11Q12 3 12 4V7.5Q12 8.5 11 8.5H6V9H9V11Q9 12 8.5 12Z" fill="none" stroke="#42413f" stroke-width="1.6"/><path d="M3.5 0H8Q9 0 9 1V5.5Q9 6.5 8 6.5H4Q3 6.5 3 7.5V9H1Q0 9 0 8V4.5Q0 3.5 1 3.5H6V3H3V1Q3 0 3.5 0Z" fill="#3d9ad6"/><path d="M8.5 12H4Q3 12 3 11V6.5Q3 5.5 4 5.5H8Q9 5.5 9 4.5V3H11Q12 3 12 4V7.5Q12 8.5 11 8.5H6V9H9V11Q9 12 8.5 12Z" fill="none" stroke="#42413f" stroke-width="0.9"/><path d="M8.5 12H4Q3 12 3 11V6.5Q3 5.5 4 5.5H8Q9 5.5 9 4.5V3H11Q12 3 12 4V7.5Q12 8.5 11 8.5H6V9H9V11Q9 12 8.5 12Z" fill="#f5c518"/><circle cx="4.6" cy="1.6" r="0.7" fill="#42413f"/><circle cx="7.4" cy="10.4" r="0.7" fill="#42413f"/></g></svg>
<div class="t" style="left:1267px;top:81px;font-size:16px;line-height:18px;color:#bbbbbb;transform:scaleX(0.935);transform-origin:0 0;">__init__.py</div>
<svg style="left:1350px;top:84px;" width="10" height="10" viewBox="0 0 10 10"><path d="M0.5 0.5L9.5 9.5M9.5 0.5L0.5 9.5" stroke="#85878a" stroke-width="1.1"/></svg>
<svg style="left:1688px;top:81px;" width="4" height="16" viewBox="0 0 4 16"><circle cx="2" cy="2" r="1.6" fill="#afb1b3"/><circle cx="2" cy="8" r="1.6" fill="#afb1b3"/><circle cx="2" cy="14" r="1.6" fill="#afb1b3"/></svg>
<div style="left:283px;top:106px;width:1422px;height:781px;overflow:hidden">
<div class="m" style="left:0px;top:2.3px;width:35px;text-align:right;font-size:18px;transform:scaleX(0.85);transform-origin:35px 0;line-height:27.5px;color:#606366">1</div>
<div class="m" style="left:89px;top:2.3px;font-size:16.66px;line-height:27.5px;color:#a9b7c6;white-space:pre"><span style="color:#cc7832">import</span> os</div>
<div class="m" style="left:0px;top:29.8px;width:35px;text-align:right;font-size:18px;transform:scaleX(0.85);transform-origin:35px 0;line-height:27.5px;color:#606366">2</div>
<div class="m" style="left:89px;top:29.8px;font-size:16.66px;line-height:27.5px;color:#a9b7c6;white-space:pre"><span style="color:#cc7832">import</span> transformers</div>
<div class="m" style="left:0px;top:57.3px;width:35px;text-align:right;font-size:18px;transform:scaleX(0.85);transform-origin:35px 0;line-height:27.5px;color:#606366">3</div>
<div class="m" style="left:89px;top:57.3px;font-size:16.66px;line-height:27.5px;color:#a9b7c6;white-space:pre"><span style="color:#cc7832">import</span> argparse</div>
<div class="m" style="left:0px;top:84.8px;width:35px;text-align:right;font-size:18px;transform:scaleX(0.85);transform-origin:35px 0;line-height:27.5px;color:#606366">4</div>
<div class="m" style="left:89px;top:84.8px;font-size:16.66px;line-height:27.5px;color:#a9b7c6;white-space:pre"><span style="color:#cc7832">import</span> torch</div>
<div class="m" style="left:0px;top:112.3px;width:35px;text-align:right;font-size:18px;transform:scaleX(0.85);transform-origin:35px 0;line-height:27.5px;color:#606366">5</div>
<div class="m" style="left:89px;top:112.3px;font-size:16.66px;line-height:27.5px;color:#a9b7c6;white-space:pre"><span style="color:#808080">import logging</span></div>
<div class="m" style="left:0px;top:139.8px;width:35px;text-align:right;font-size:18px;transform:scaleX(0.85);transform-origin:35px 0;line-height:27.5px;color:#606366">6</div>
<div class="m" style="left:89px;top:139.8px;font-size:16.66px;line-height:27.5px;color:#a9b7c6;white-space:pre"><span style="color:#808080">from torch.utils.data import ConcatDataset, DataLoader</span></div>
<div class="m" style="left:0px;top:167.3px;width:35px;text-align:right;font-size:18px;transform:scaleX(0.85);transform-origin:35px 0;line-height:27.5px;color:#606366">7</div>
<div class="m" style="left:89px;top:167.3px;font-size:16.66px;line-height:27.5px;color:#a9b7c6;white-space:pre"><span style="color:#cc7832">from</span> datasets <span style="color:#cc7832">import</span> load_dataset<span style="color:#cc7832">,</span> <span style="color:#808080">concatenate_datasets</span></div>
<div class="m" style="left:0px;top:194.8px;width:35px;text-align:right;font-size:18px;transform:scaleX(0.85);transform-origin:35px 0;line-height:27.5px;color:#606366">8</div>
<div class="m" style="left:89px;top:194.8px;font-size:16.66px;line-height:27.5px;color:#a9b7c6;white-space:pre"><span style="color:#cc7832">import</span> re</div>
<div class="m" style="left:0px;top:222.3px;width:35px;text-align:right;font-size:18px;transform:scaleX(0.85);transform-origin:35px 0;line-height:27.5px;color:#606366">9</div>
<div class="m" style="left:89px;top:222.3px;font-size:16.66px;line-height:27.5px;color:#a9b7c6;white-space:pre"></div>
<div class="m" style="left:0px;top:249.8px;width:35px;text-align:right;font-size:18px;transform:scaleX(0.85);transform-origin:35px 0;line-height:27.5px;color:#606366">10</div>
<div class="m" style="left:89px;top:249.8px;font-size:16.66px;line-height:27.5px;color:#a9b7c6;white-space:pre"><span style="color:#cc7832">from</span> transformers <span style="color:#cc7832">import</span> (</div>
<div class="m" style="left:0px;top:277.3px;width:35px;text-align:right;font-size:18px;transform:scaleX(0.85);transform-origin:35px 0;line-height:27.5px;color:#606366">11</div>
<div class="m" style="left:89px;top:277.3px;font-size:16.66px;line-height:27.5px;color:#a9b7c6;white-space:pre">    T5Config<span style="color:#cc7832">,</span></div>
<div class="m" style="left:0px;top:304.8px;width:35px;text-align:right;font-size:18px;transform:scaleX(0.85);transform-origin:35px 0;line-height:27.5px;color:#606366">12</div>
<div class="m" style="left:89px;top:304.8px;font-size:16.66px;line-height:27.5px;color:#a9b7c6;white-space:pre">    T5ForConditionalGeneration<span style="color:#cc7832">,</span></div>
<div class="m" style="left:0px;top:332.3px;width:35px;text-align:right;font-size:18px;transform:scaleX(0.85);transform-origin:35px 0;line-height:27.5px;color:#606366">13</div>
<div class="m" style="left:89px;top:332.3px;font-size:16.66px;line-height:27.5px;color:#a9b7c6;white-space:pre">    AutoTokenizer<span style="color:#cc7832">,</span></div>
<div class="m" style="left:0px;top:359.8px;width:35px;text-align:right;font-size:18px;transform:scaleX(0.85);transform-origin:35px 0;line-height:27.5px;color:#606366">14</div>
<div class="m" style="left:89px;top:359.8px;font-size:16.66px;line-height:27.5px;color:#a9b7c6;white-space:pre">    <span class="err">LlamaForCausalLM</span></div>
<div class="m" style="left:0px;top:387.3px;width:35px;text-align:right;font-size:18px;transform:scaleX(0.85);transform-origin:35px 0;line-height:27.5px;color:#606366">15</div>
<div class="m" style="left:89px;top:387.3px;font-size:16.66px;line-height:27.5px;color:#a9b7c6;white-space:pre">)</div>
<div class="m" style="left:0px;top:414.8px;width:35px;text-align:right;font-size:18px;transform:scaleX(0.85);transform-origin:35px 0;line-height:27.5px;color:#606366">16</div>
<div class="m" style="left:89px;top:414.8px;font-size:16.66px;line-height:27.5px;color:#a9b7c6;white-space:pre"></div>
<div class="m" style="left:0px;top:442.3px;width:35px;text-align:right;font-size:18px;transform:scaleX(0.85);transform-origin:35px 0;line-height:27.5px;color:#606366">17</div>
<div class="m" style="left:89px;top:442.3px;font-size:16.66px;line-height:27.5px;color:#a9b7c6;white-space:pre"><span style="color:#cc7832">from</span> <span class="err">peft</span> <span style="color:#cc7832">import</span> (  <span style="color:#808080"># noqa: E402</span></div>
<div class="m" style="left:0px;top:469.8px;width:35px;text-align:right;font-size:18px;transform:scaleX(0.85);transform-origin:35px 0;line-height:27.5px;color:#606366">18</div>
<div class="m" style="left:89px;top:469.8px;font-size:16.66px;line-height:27.5px;color:#a9b7c6;white-space:pre">    <span class="err">LoraConfig</span><span style="color:#cc7832">,</span></div>
<div class="m" style="left:0px;top:497.3px;width:35px;text-align:right;font-size:18px;transform:scaleX(0.85);transform-origin:35px 0;line-height:27.5px;color:#606366">19</div>
<div class="m" style="left:89px;top:497.3px;font-size:16.66px;line-height:27.5px;color:#a9b7c6;white-space:pre">    <span class="err">get_peft_model</span><span style="color:#cc7832">,</span></div>
<div class="m" style="left:0px;top:524.8px;width:35px;text-align:right;font-size:18px;transform:scaleX(0.85);transform-origin:35px 0;line-height:27.5px;color:#606366">20</div>
<div class="m" style="left:89px;top:524.8px;font-size:16.66px;line-height:27.5px;color:#a9b7c6;white-space:pre">    <span class="err">get_peft_model_state_dict</span><span style="color:#cc7832">,</span></div>
<div class="m" style="left:0px;top:552.3px;width:35px;text-align:right;font-size:18px;transform:scaleX(0.85);transform-origin:35px 0;line-height:27.5px;color:#606366">21</div>
<div class="m" style="left:89px;top:552.3px;font-size:16.66px;line-height:27.5px;color:#a9b7c6;white-space:pre">    <span class="err">prepare_model_for_int8_training</span><span style="color:#cc7832">,</span></div>
<div class="m" style="left:0px;top:579.8px;width:35px;text-align:right;font-size:18px;transform:scaleX(0.85);transform-origin:35px 0;line-height:27.5px;color:#606366">22</div>
<div class="m" style="left:89px;top:579.8px;font-size:16.66px;line-height:27.5px;color:#a9b7c6;white-space:pre">    <span class="err">set_peft_model_state_dict</span><span style="color:#cc7832">,</span></div>
<div class="m" style="left:0px;top:607.3px;width:35px;text-align:right;font-size:18px;transform:scaleX(0.85);transform-origin:35px 0;line-height:27.5px;color:#606366">23</div>
<div class="m" style="left:89px;top:607.3px;font-size:16.66px;line-height:27.5px;color:#a9b7c6;white-space:pre">)</div>
<div class="m" style="left:0px;top:634.8px;width:35px;text-align:right;font-size:18px;transform:scaleX(0.85);transform-origin:35px 0;line-height:27.5px;color:#a4a3a3">24</div>
<div class="m" style="left:89px;top:634.8px;font-size:16.66px;line-height:27.5px;color:#a9b7c6;white-space:pre"></div>
<div class="m" style="left:0px;top:662.3px;width:35px;text-align:right;font-size:18px;transform:scaleX(0.85);transform-origin:35px 0;line-height:27.5px;color:#606366">25</div>
<div class="m" style="left:89px;top:662.3px;font-size:16.66px;line-height:27.5px;color:#a9b7c6;white-space:pre"><span style="color:#cc7832">from</span> utils <span style="color:#cc7832">import</span> utils</div>
<div class="m" style="left:0px;top:689.8px;width:35px;text-align:right;font-size:18px;transform:scaleX(0.85);transform-origin:35px 0;line-height:27.5px;color:#606366">26</div>
<div class="m" style="left:89px;top:689.8px;font-size:16.66px;line-height:27.5px;color:#a9b7c6;white-space:pre"><span style="color:#cc7832">from</span> utils <span style="color:#cc7832">import</span> indexing</div>
<div class="m" style="left:0px;top:717.3px;width:35px;text-align:right;font-size:18px;transform:scaleX(0.85);transform-origin:35px 0;line-height:27.5px;color:#606366">27</div>
<div class="m" style="left:89px;top:717.3px;font-size:16.66px;line-height:27.5px;color:#a9b7c6;white-space:pre"></div>
<div class="m" style="left:0px;top:744.8px;width:35px;text-align:right;font-size:18px;transform:scaleX(0.85);transform-origin:35px 0;line-height:27.5px;color:#606366">28</div>
<div class="m" style="left:89px;top:744.8px;font-size:16.66px;line-height:27.5px;color:#a9b7c6;white-space:pre"></div>
<div class="m" style="left:0px;top:772.3px;width:35px;text-align:right;font-size:18px;transform:scaleX(0.85);transform-origin:35px 0;line-height:27.5px;color:#606366">29</div>
<div class="m" style="left:89px;top:772.3px;font-size:16.66px;line-height:27.5px;color:#a9b7c6;white-space:pre"></div>
</div>
<svg style="left:359px;top:115px;" width="12" height="16" viewBox="0 0 12 16"><path d="M0.5 0.5h10v8.5l-5 5.5-5-5.5z" fill="#2b2b2b" stroke="#6a6c6e"/><path d="M3 5.5h5" stroke="#8a8c8e"/></svg>
<svg style="left:359px;top:798px;" width="12" height="17" viewBox="0 0 12 17"><path d="M0.5 16.5h10v-8.5l-5-5.5-5 5.5z" fill="#2b2b2b" stroke="#6a6c6e"/><path d="M3 10.5h5" stroke="#8a8c8e"/></svg>
<svg style="left:0;top:0" width="1733" height="971"><path d="M412 488.2L414 485.40000000000003L416 488.2L418 485.40000000000003L420 488.2L422 485.40000000000003L424 488.2L426 485.40000000000003L428 488.2L430 485.40000000000003L432 488.2L434 485.40000000000003L436 488.2L438 485.40000000000003L440 488.2L442 485.40000000000003L444 488.2L446 485.40000000000003L448 488.2L450 485.40000000000003L452 488.2L454 485.40000000000003L456 488.2L458 485.40000000000003L460 488.2L462 485.40000000000003L464 488.2L466 485.40000000000003L468 488.2L470 485.40000000000003L472 488.2L474 485.40000000000003L476 488.2L478 485.40000000000003L480 488.2L482 485.40000000000003L484 488.2L486 485.40000000000003L488 488.2L490 485.40000000000003L492 488.2L494 485.40000000000003L496 488.2L498 485.40000000000003L500 488.2L502 485.40000000000003L504 488.2L506 485.40000000000003L508 488.2L510 485.40000000000003L512 488.2L514 485.40000000000003L516 488.2L518 485.40000000000003L520 488.2L522 485.40000000000003L524 488.2L526 485.40000000000003L528 488.2L530 485.40000000000003L532 488.2L534 485.40000000000003L536 488.2L538 485.40000000000003L540 488.2L542 485.40000000000003L544 488.2L546 485.40000000000003L548 488.2L550 485.40000000000003L552 488.2L554 485.40000000000003L556 488.2L558 485.40000000000003L560 488.2L562 485.40000000000003L564 488.2L566 485.40000000000003L568 488.2L570 485.40000000000003L572 488.2" stroke="#bc3f3c" stroke-width="1" fill="none"/></svg>
<svg style="left:0;top:0" width="1733" height="971"><path d="M422 570.6999999999999L424 567.9L426 570.6999999999999L428 567.9L430 570.6999999999999L432 567.9L434 570.6999999999999L436 567.9L438 570.6999999999999L440 567.9L442 570.6999999999999L444 567.9L446 570.6999999999999L448 567.9L450 570.6999999999999L452 567.9L454 570.6999999999999L456 567.9L458 570.6999999999999L460 567.9L462 570.6999999999999" stroke="#bc3f3c" stroke-width="1" fill="none"/></svg>
<svg style="left:0;top:0" width="1733" height="971"><path d="M412 598.1999999999999L414 595.4L416 598.1999999999999L418 595.4L420 598.1999999999999L422 595.4L424 598.1999999999999L426 595.4L428 598.1999999999999L430 595.4L432 598.1999999999999L434 595.4L436 598.1999999999999L438 595.4L440 598.1999999999999L442 595.4L444 598.1999999999999L446 595.4L448 598.1999999999999L450 595.4L452 598.1999999999999L454 595.4L456 598.1999999999999L458 595.4L460 598.1999999999999L462 595.4L464 598.1999999999999L466 595.4L468 598.1999999999999L470 595.4L472 598.1999999999999L474 595.4L476 598.1999999999999L478 595.4L480 598.1999999999999L482 595.4L484 598.1999999999999L486 595.4L488 598.1999999999999L490 595.4L492 598.1999999999999L494 595.4L496 598.1999999999999L498 595.4L500 598.1999999999999L502 595.4L504 598.1999999999999L506 595.4L508 598.1999999999999L510 595.4L512 598.1999999999999" stroke="#bc3f3c" stroke-width="1" fill="none"/></svg>
<svg style="left:0;top:0" width="1733" height="971"><path d="M412 625.6999999999999L414 622.9L416 625.6999999999999L418 622.9L420 625.6999999999999L422 622.9L424 625.6999999999999L426 622.9L428 625.6999999999999L430 622.9L432 625.6999999999999L434 622.9L436 625.6999999999999L438 622.9L440 625.6999999999999L442 622.9L444 625.6999999999999L446 622.9L448 625.6999999999999L450 622.9L452 625.6999999999999L454 622.9L456 625.6999999999999L458 622.9L460 625.6999999999999L462 622.9L464 625.6999999999999L466 622.9L468 625.6999999999999L470 622.9L472 625.6999999999999L474 622.9L476 625.6999999999999L478 622.9L480 625.6999999999999L482 622.9L484 625.6999999999999L486 622.9L488 625.6999999999999L490 622.9L492 625.6999999999999L494 622.9L496 625.6999999999999L498 622.9L500 625.6999999999999L502 622.9L504 625.6999999999999L506 622.9L508 625.6999999999999L510 622.9L512 625.6999999999999L514 622.9L516 625.6999999999999L518 622.9L520 625.6999999999999L522 622.9L524 625.6999999999999L526 622.9L528 625.6999999999999L530 622.9L532 625.6999999999999L534 622.9L536 625.6999999999999L538 622.9L540 625.6999999999999L542 622.9L544 625.6999999999999L546 622.9L548 625.6999999999999L550 622.9L552 625.6999999999999" stroke="#bc3f3c" stroke-width="1" fill="none"/></svg>
<svg style="left:0;top:0" width="1733" height="971"><path d="M412 653.1999999999999L414 650.4L416 653.1999999999999L418 650.4L420 653.1999999999999L422 650.4L424 653.1999999999999L426 650.4L428 653.1999999999999L430 650.4L432 653.1999999999999L434 650.4L436 653.1999999999999L438 650.4L440 653.1999999999999L442 650.4L444 653.1999999999999L446 650.4L448 653.1999999999999L450 650.4L452 653.1999999999999L454 650.4L456 653.1999999999999L458 650.4L460 653.1999999999999L462 650.4L464 653.1999999999999L466 650.4L468 653.1999999999999L470 650.4L472 653.1999999999999L474 650.4L476 653.1999999999999L478 650.4L480 653.1999999999999L482 650.4L484 653.1999999999999L486 650.4L488 653.1999999999999L490 650.4L492 653.1999999999999L494 650.4L496 653.1999999999999L498 650.4L500 653.1999999999999L502 650.4L504 653.1999999999999L506 650.4L508 653.1999999999999L510 650.4L512 653.1999999999999L514 650.4L516 653.1999999999999L518 650.4L520 653.1999999999999L522 650.4L524 653.1999999999999L526 650.4L528 653.1999999999999L530 650.4L532 653.1999999999999L534 650.4L536 653.1999999999999L538 650.4L540 653.1999999999999L542 650.4L544 653.1999999999999L546 650.4L548 653.1999999999999L550 650.4L552 653.1999999999999L554 650.4L556 653.1999999999999L558 650.4L560 653.1999999999999L562 650.4L564 653.1999999999999L566 650.4L568 653.1999999999999L570 650.4L572 653.1999999999999L574 650.4L576 653.1999999999999L578 650.4L580 653.1999999999999L582 650.4L584 653.1999999999999L586 650.4L588 653.1999999999999L590 650.4L592 653.1999999999999L594 650.4L596 653.1999999999999L598 650.4L600 653.1999999999999L602 650.4L604 653.1999999999999L606 650.4L608 653.1999999999999L610 650.4L612 653.1999999999999L614 650.4L616 653.1999999999999L618 650.4L620 653.1999999999999L622 650.4L624 653.1999999999999L626 650.4L628 653.1999999999999L630 650.4L632 653.1999999999999L634 650.4L636 653.1999999999999L638 650.4L640 653.1999999999999L642 650.4L644 653.1999999999999L646 650.4L648 653.1999999999999L650 650.4L652 653.1999999999999L654 650.4L656 653.1999999999999L658 650.4L660 653.1999999999999L662 650.4" stroke="#bc3f3c" stroke-width="1" fill="none"/></svg>
<svg style="left:0;top:0" width="1733" height="971"><path d="M412 680.6999999999999L414 677.9L416 680.6999999999999L418 677.9L420 680.6999999999999L422 677.9L424 680.6999999999999L426 677.9L428 680.6999999999999L430 677.9L432 680.6999999999999L434 677.9L436 680.6999999999999L438 677.9L440 680.6999999999999L442 677.9L444 680.6999999999999L446 677.9L448 680.6999999999999L450 677.9L452 680.6999999999999L454 677.9L456 680.6999999999999L458 677.9L460 680.6999999999999L462 677.9L464 680.6999999999999L466 677.9L468 680.6999999999999L470 677.9L472 680.6999999999999L474 677.9L476 680.6999999999999L478 677.9L480 680.6999999999999L482 677.9L484 680.6999999999999L486 677.9L488 680.6999999999999L490 677.9L492 680.6999999999999L494 677.9L496 680.6999999999999L498 677.9L500 680.6999999999999L502 677.9L504 680.6999999999999L506 677.9L508 680.6999999999999L510 677.9L512 680.6999999999999L514 677.9L516 680.6999999999999L518 677.9L520 680.6999999999999L522 677.9L524 680.6999999999999L526 677.9L528 680.6999999999999L530 677.9L532 680.6999999999999L534 677.9L536 680.6999999999999L538 677.9L540 680.6999999999999L542 677.9L544 680.6999999999999L546 677.9L548 680.6999999999999L550 677.9L552 680.6999999999999L554 677.9L556 680.6999999999999L558 677.9L560 680.6999999999999L562 677.9L564 680.6999999999999L566 677.9L568 680.6999999999999L570 677.9L572 680.6999999999999L574 677.9L576 680.6999999999999L578 677.9L580 680.6999999999999L582 677.9L584 680.6999999999999L586 677.9L588 680.6999999999999L590 677.9L592 680.6999999999999L594 677.9L596 680.6999999999999L598 677.9L600 680.6999999999999L602 677.9L604 680.6999999999999L606 677.9L608 680.6999999999999L610 677.9L612 680.6999999999999L614 677.9L616 680.6999999999999L618 677.9L620 680.6999999999999L622 677.9L624 680.6999999999999L626 677.9L628 680.6999999999999L630 677.9L632 680.6999999999999L634 677.9L636 680.6999999999999L638 677.9L640 680.6999999999999L642 677.9L644 680.6999999999999L646 677.9L648 680.6999999999999L650 677.9L652 680.6999999999999L654 677.9L656 680.6999999999999L658 677.9L660 680.6999999999999L662 677.9L664 680.6999999999999L666 677.9L668 680.6999999999999L670 677.9L672 680.6999999999999L674 677.9L676 680.6999999999999L678 677.9L680 680.6999999999999L682 677.9L684 680.6999999999999L686 677.9L688 680.6999999999999L690 677.9L692 680.6999999999999L694 677.9L696 680.6999999999999L698 677.9L700 680.6999999999999L702 677.9L704 680.6999999999999L706 677.9L708 680.6999999999999L710 677.9L712 680.6999999999999L714 677.9L716 680.6999999999999L718 677.9L720 680.6999999999999L722 677.9" stroke="#bc3f3c" stroke-width="1" fill="none"/></svg>
<svg style="left:0;top:0" width="1733" height="971"><path d="M412 708.1999999999999L414 705.4L416 708.1999999999999L418 705.4L420 708.1999999999999L422 705.4L424 708.1999999999999L426 705.4L428 708.1999999999999L430 705.4L432 708.1999999999999L434 705.4L436 708.1999999999999L438 705.4L440 708.1999999999999L442 705.4L444 708.1999999999999L446 705.4L448 708.1999999999999L450 705.4L452 708.1999999999999L454 705.4L456 708.1999999999999L458 705.4L460 708.1999999999999L462 705.4L464 708.1999999999999L466 705.4L468 708.1999999999999L470 705.4L472 708.1999999999999L474 705.4L476 708.1999999999999L478 705.4L480 708.1999999999999L482 705.4L484 708.1999999999999L486 705.4L488 708.1999999999999L490 705.4L492 708.1999999999999L494 705.4L496 708.1999999999999L498 705.4L500 708.1999999999999L502 705.4L504 708.1999999999999L506 705.4L508 708.1999999999999L510 705.4L512 708.1999999999999L514 705.4L516 708.1999999999999L518 705.4L520 708.1999999999999L522 705.4L524 708.1999999999999L526 705.4L528 708.1999999999999L530 705.4L532 708.1999999999999L534 705.4L536 708.1999999999999L538 705.4L540 708.1999999999999L542 705.4L544 708.1999999999999L546 705.4L548 708.1999999999999L550 705.4L552 708.1999999999999L554 705.4L556 708.1999999999999L558 705.4L560 708.1999999999999L562 705.4L564 708.1999999999999L566 705.4L568 708.1999999999999L570 705.4L572 708.1999999999999L574 705.4L576 708.1999999999999L578 705.4L580 708.1999999999999L582 705.4L584 708.1999999999999L586 705.4L588 708.1999999999999L590 705.4L592 708.1999999999999L594 705.4L596 708.1999999999999L598 705.4L600 708.1999999999999L602 705.4L604 708.1999999999999L606 705.4L608 708.1999999999999L610 705.4L612 708.1999999999999L614 705.4L616 708.1999999999999L618 705.4L620 708.1999999999999L622 705.4L624 708.1999999999999L626 705.4L628 708.1999999999999L630 705.4L632 708.1999999999999L634 705.4L636 708.1999999999999L638 705.4L640 708.1999999999999L642 705.4L644 708.1999999999999L646 705.4L648 708.1999999999999L650 705.4L652 708.1999999999999L654 705.4L656 708.1999999999999L658 705.4L660 708.1999999999999L662 705.4" stroke="#bc3f3c" stroke-width="1" fill="none"/></svg>
<div style="left:373px;top:876px;width:844px;height:10px;background:#4d4d4d;"></div>
<svg style="left:1525px;top:116px;" width="14" height="14" viewBox="0 0 14 14"><circle cx="7" cy="7" r="6.5" fill="#b8312f"/><rect x="6" y="3" width="2" height="5.5" fill="#2b2b2b"/><rect x="6" y="9.5" width="2" height="2" fill="#2b2b2b"/></svg>
<div class="t" style="left:1545px;top:115px;font-size:15px;line-height:16px;color:#bbbbbb;">10</div>
<svg style="left:1571px;top:115px;" width="16" height="15" viewBox="0 0 16 15"><path d="M8 0.5L15.5 14.5H0.5z" fill="#d9a332"/><rect x="7" y="5" width="2" height="5" fill="#2b2b2b"/><rect x="7" y="11" width="2" height="2" fill="#2b2b2b"/></svg>
<div class="t" style="left:1590px;top:115px;font-size:15px;line-height:16px;color:#bbbbbb;">8</div>
<svg style="left:1608px;top:115px;" width="16" height="15" viewBox="0 0 16 15"><path d="M8 0.5L15.5 14.5H0.5z" fill="#7d7660"/><rect x="7" y="5" width="2" height="5" fill="#2b2b2b"/><rect x="7" y="11" width="2" height="2" fill="#2b2b2b"/></svg>
<div class="t" style="left:1628px;top:115px;font-size:15px;line-height:16px;color:#bbbbbb;">14</div>
<svg style="left:1659px;top:119px;" width="11" height="7" viewBox="0 0 11 7"><path d="M0.5 6l5-5 5 5" stroke="#afb1b3" stroke-width="1.4" fill="none"/></svg>
<svg style="left:1685px;top:119px;" width="11" height="7" viewBox="0 0 11 7"><path d="M0.5 1l5 5 5-5" stroke="#afb1b3" stroke-width="1.4" fill="none"/></svg>
<div style="left:1693px;top:139px;width:10px;height:90px;background:#4d4d4d;"></div>
<div style="left:1687px;top:151.39999999999998px;width:17px;height:2.6px;background:#c9a22e;opacity:0.9"></div>
<div style="left:1687px;top:155.2px;width:17px;height:2.6px;background:#c9a22e;opacity:0.9"></div>
<div style="left:1687px;top:157.7px;width:17px;height:2.6px;background:#c9a22e;opacity:0.9"></div>
<div style="left:1687px;top:181.2px;width:17px;height:2.6px;background:#b63a39;opacity:0.9"></div>
<div style="left:1687px;top:190.0px;width:17px;height:2.6px;background:#b63a39;opacity:0.9"></div>
<div style="left:1687px;top:193.89999999999998px;width:17px;height:2.6px;background:#b63a39;opacity:0.9"></div>
<div style="left:1687px;top:197.7px;width:17px;height:2.6px;background:#b63a39;opacity:0.9"></div>
<div style="left:1687px;top:200.2px;width:17px;height:2.6px;background:#b63a39;opacity:0.9"></div>
<div style="left:1687px;top:204.0px;width:17px;height:2.6px;background:#b63a39;opacity:0.9"></div>
<div style="left:1687px;top:207.6px;width:17px;height:2.6px;background:#b63a39;opacity:0.9"></div>
<div style="left:1687px;top:236.2px;width:17px;height:2.6px;background:#7f7659;opacity:0.9"></div>
<div style="left:1687px;top:272.2px;width:17px;height:2.6px;background:#7f7659;opacity:0.9"></div>
<div style="left:1687px;top:284.7px;width:17px;height:2.6px;background:#7f7659;opacity:0.9"></div>
<div style="left:1687px;top:389.7px;width:17px;height:2.6px;background:#b63a39;opacity:0.9"></div>
<div style="left:1687px;top:406.2px;width:17px;height:2.6px;background:#7f7659;opacity:0.9"></div>
<div style="left:1687px;top:415.7px;width:17px;height:2.6px;background:#7f7659;opacity:0.9"></div>
<div style="left:1687px;top:419.7px;width:17px;height:2.6px;background:#7f7659;opacity:0.9"></div>
<div style="left:1687px;top:439.7px;width:17px;height:2.6px;background:#7f7659;opacity:0.9"></div>
<div style="left:1687px;top:569.9000000000001px;width:17px;height:2.6px;background:#c9a22e;opacity:0.9"></div>
<div style="left:1687px;top:579.7px;width:17px;height:2.6px;background:#c9a22e;opacity:0.9"></div>
<div style="left:1687px;top:583.7px;width:17px;height:2.6px;background:#c9a22e;opacity:0.9"></div>
<div style="left:1687px;top:595.7px;width:17px;height:2.6px;background:#8d8570;opacity:0.9"></div>
<div style="left:1687px;top:599.7px;width:17px;height:2.6px;background:#8d8570;opacity:0.9"></div>
<div style="left:1687px;top:603.7px;width:17px;height:2.6px;background:#8d8570;opacity:0.9"></div>
<div style="left:1687px;top:616.2px;width:17px;height:2.6px;background:#b63a39;opacity:0.9"></div>
<div style="left:1687px;top:619.9000000000001px;width:17px;height:2.6px;background:#b63a39;opacity:0.9"></div>
<div style="left:1687px;top:747.2px;width:17px;height:2.6px;background:#7f7659;opacity:0.9"></div>
<div style="left:1687px;top:854.7px;width:17px;height:2.6px;background:#7d7660;opacity:0.9"></div>
<svg style="left:42px;top:925px;" width="11" height="17" viewBox="0 0 11 17"><circle cx="2" cy="2" r="1.8" fill="#afb1b3"/><circle cx="2" cy="15" r="1.8" fill="#afb1b3"/><circle cx="9" cy="4" r="1.8" fill="#afb1b3"/><path d="M2 2v13M9 4c0 5-7 5-7 9" stroke="#afb1b3" stroke-width="1.8" fill="none"/></svg>
<div class="t" style="left:61px;top:926px;font-size:14px;line-height:17px;color:#bbbbbb;">Git</div>
<svg style="left:104px;top:925px;" width="15" height="15" viewBox="0 0 15 15"><path d="M7.5 0.5L14.5 4L7.5 7.5L0.5 4z" fill="#afb1b3"/><path d="M0.5 7.5L7.5 11L14.5 7.5M0.5 11L7.5 14.5L14.5 11" stroke="#afb1b3" stroke-width="1.5" fill="none"/></svg>
<div class="t" style="left:125px;top:926px;font-size:14px;line-height:17px;color:#bbbbbb;">Python 软件包</div>
<svg style="left:240px;top:927px;" width="14" height="11" viewBox="0 0 14 11"><path d="M0 1h2M4 1h10M0 5.5h2M4 5.5h10M0 10h2M4 10h10" stroke="#afb1b3" stroke-width="2"/></svg>
<div class="t" style="left:260px;top:926px;font-size:14px;line-height:17px;color:#bbbbbb;">TODO</div>
<svg style="left:324px;top:924px;" width="17" height="17" viewBox="0 0 17 17"><g transform="translate(1.8 1.9) scale(1.1833333333333333)"><path d="M3.5 0H8Q9 0 9 1V5.5Q9 6.5 8 6.5H4Q3 6.5 3 7.5V9H1Q0 9 0 8V4.5Q0 3.5 1 3.5H6V3H3V1Q3 0 3.5 0Z" fill="none" stroke="#3c3f41" stroke-width="1.6"/><path d="M8.5 12H4Q3 12 3 11V6.5Q3 5.5 4 5.5H8Q9 5.5 9 4.5V3H11Q12 3 12 4V7.5Q12 8.5 11 8.5H6V9H9V11Q9 12 8.5 12Z" fill="none" stroke="#3c3f41" stroke-width="1.6"/><path d="M3.5 0H8Q9 0 9 1V5.5Q9 6.5 8 6.5H4Q3 6.5 3 7.5V9H1Q0 9 0 8V4.5Q0 3.5 1 3.5H6V3H3V1Q3 0 3.5 0Z" fill="#afb1b3"/><path d="M8.5 12H4Q3 12 3 11V6.5Q3 5.5 4 5.5H8Q9 5.5 9 4.5V3H11Q12 3 12 4V7.5Q12 8.5 11 8.5H6V9H9V11Q9 12 8.5 12Z" fill="none" stroke="#3c3f41" stroke-width="0.9"/><path d="M8.5 12H4Q3 12 3 11V6.5Q3 5.5 4 5.5H8Q9 5.5 9 4.5V3H11Q12 3 12 4V7.5Q12 8.5 11 8.5H6V9H9V11Q9 12 8.5 12Z" fill="#afb1b3"/><circle cx="4.6" cy="1.6" r="0.7" fill="#3c3f41"/><circle cx="7.4" cy="10.4" r="0.7" fill="#3c3f41"/></g></svg>
<div class="t" style="left:346px;top:926px;font-size:14px;line-height:17px;color:#bbbbbb;">Python 控制台</div>
<svg style="left:460px;top:925px;" width="13" height="13" viewBox="0 0 13 13"><circle cx="6.5" cy="6.5" r="6.5" fill="#afb1b3"/><rect x="5.5" y="2.5" width="2" height="5.5" fill="#3c3f41"/><rect x="5.5" y="9" width="2" height="2" fill="#3c3f41"/></svg>
<div class="t" style="left:479px;top:926px;font-size:14px;line-height:17px;color:#bbbbbb;">问题</div>
<svg style="left:529px;top:925px;" width="15" height="13" viewBox="0 0 15 13"><rect x="0" y="0" width="15" height="13" fill="#afb1b3"/><path d="M2.5 3l3 2.5-3 2.5" stroke="#3c3f41" stroke-width="1.4" fill="none"/><path d="M7 10h5" stroke="#3c3f41" stroke-width="1.4"/></svg>
<div class="t" style="left:550px;top:926px;font-size:14px;line-height:17px;color:#bbbbbb;">终端</div>
<svg style="left:598px;top:925px;" width="16" height="15" viewBox="0 0 16 15"><path d="M4 0.5h8l4 7-4 7H4l-4-7z" fill="#afb1b3"/><path d="M6 4l5 3.5-5 3.5z" fill="#3c3f41"/></svg>
<div class="t" style="left:620px;top:926px;font-size:14px;line-height:17px;color:#bbbbbb;">服务</div>
<svg style="left:17px;top:951px;" width="15" height="15" viewBox="0 0 15 15"><rect x="3.5" y="0.5" width="11" height="11" stroke="#afb1b3" fill="none"/><path d="M1 3v11h11" stroke="#afb1b3" fill="none"/></svg>
<div class="t" style="left:1269px;top:951px;font-size:15px;line-height:17px;color:#bbbbbb;">24:1</div>
<div class="t" style="left:1315px;top:951px;font-size:15px;line-height:17px;color:#bbbbbb;">CRLF</div>
<div class="t" style="left:1366px;top:951px;font-size:15px;line-height:17px;color:#bbbbbb;">UTF-8</div>
<svg style="left:1424px;top:950px;" width="20" height="19" viewBox="0 0 20 19"><path d="M0.8 12.2C0.8 9.6 2.2 8 4 8H16C17.8 8 19.2 9.6 19.2 12.2C19.2 16 15 18 10 18C5 18 0.8 16 0.8 12.2Z" fill="#d4d6d8"/><path d="M4.2 9.6H15.8V14.6C14 15.9 6 15.9 4.2 14.6Z" fill="#3c3f41"/><rect x="6.9" y="10.9" width="1.8" height="3" fill="#d4d6d8"/><rect x="11.3" y="10.9" width="1.8" height="3" fill="#d4d6d8"/><ellipse cx="6" cy="5.3" rx="4.2" ry="4.2" fill="#3c3f41" stroke="#d4d6d8" stroke-width="1.9"/><ellipse cx="14" cy="5.3" rx="4.2" ry="4.2" fill="#3c3f41" stroke="#d4d6d8" stroke-width="1.9"/></svg>
<svg style="left:1457px;top:950px;" width="18" height="19" viewBox="0 0 18 19"><ellipse cx="3" cy="7" rx="2" ry="2.7" fill="#cfd1d3"/><ellipse cx="6.5" cy="3" rx="2" ry="2.8" fill="#cfd1d3"/><ellipse cx="11.5" cy="3.5" rx="2" ry="2.7" fill="#cfd1d3"/><ellipse cx="14.8" cy="8.5" rx="2" ry="2.7" fill="#cfd1d3"/><path d="M8.8 7.5C6 7.5 1.8 13.5 2.4 15.6C3 17.6 5.5 18 8.8 17.3C12 18 14.5 17.6 15.1 15.6C15.7 13.5 11.5 7.5 8.8 7.5Z" fill="#cfd1d3"/><text x="4.3" y="16" font-family="Liberation Sans" font-size="6.5" font-weight="bold" fill="#3c3f41">du</text></svg>
<div class="t" style="left:1489px;top:951px;font-size:15px;line-height:17px;color:#bbbbbb;">4 个空格</div>
<div class="t" style="left:1561px;top:951px;font-size:15px;line-height:17px;color:#bbbbbb;transform:scaleX(1.13);transform-origin:0 0;">openp5</div>
<svg style="left:1635px;top:950px;" width="12" height="18" viewBox="0 0 12 18"><circle cx="3" cy="2.5" r="1.9" fill="#afb1b3"/><circle cx="3" cy="15.8" r="1.9" fill="#afb1b3"/><circle cx="10" cy="5" r="1.9" fill="#afb1b3"/><path d="M3 2.5V15.8M10 5C10 10 3 9.5 3 13" stroke="#afb1b3" stroke-width="1.9" fill="none"/></svg>
<div class="t" style="left:1655px;top:951px;font-size:15px;line-height:17px;color:#bbbbbb;transform:scaleX(1.12);transform-origin:0 0;">main</div>
<svg style="left:1702px;top:951px;" width="15" height="16" viewBox="0 0 15 16"><path d="M3 6V4a3 3 0 0 1 6 0" stroke="#afb1b3" stroke-width="1.6" fill="none"/><rect x="5" y="7" width="10" height="8" fill="#afb1b3"/></svg>
</body></html>
